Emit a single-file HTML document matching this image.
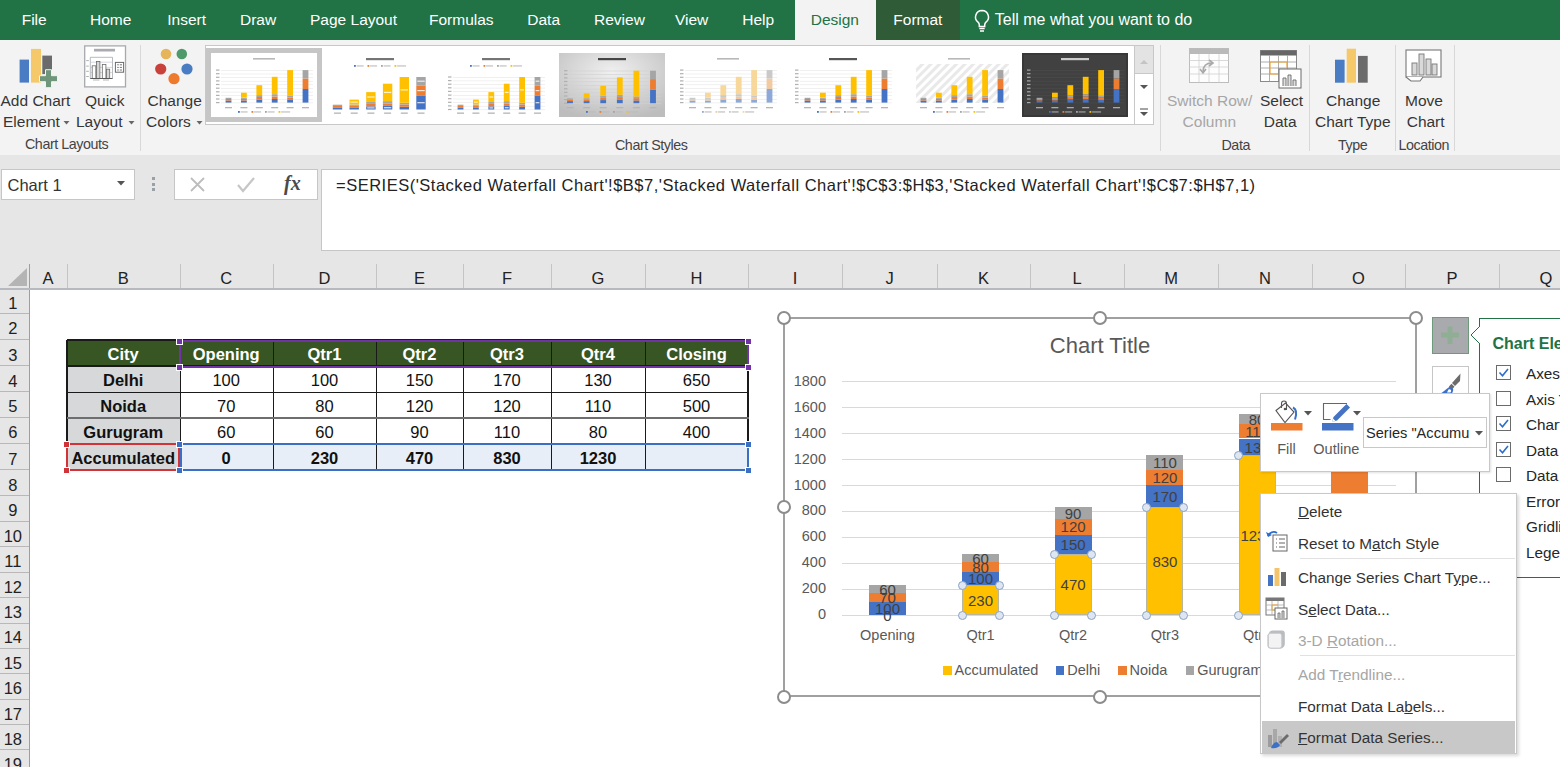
<!DOCTYPE html><html><head><meta charset="utf-8"><style>
html,body{margin:0;padding:0;}
body{width:1560px;height:767px;overflow:hidden;position:relative;background:#fff;font-family:"Liberation Sans", sans-serif;}
.t{position:absolute;line-height:1;white-space:pre;}
.r{position:absolute;box-sizing:border-box;}
</style></head><body>
<div class="r" style="left:0px;top:0px;width:1560px;height:40px;background:#217346;"></div>
<div class="r" style="left:795px;top:0px;width:81px;height:40px;background:#f3f3f3;"></div>
<div class="r" style="left:876px;top:0px;width:84px;height:40px;background:#2f5b37;"></div>
<div class="t" style="left:21.7px;top:12.3px;font-size:15.5px;color:#fff;">File</div>
<div class="t" style="left:90.0px;top:12.3px;font-size:15.5px;color:#fff;">Home</div>
<div class="t" style="left:167.3px;top:12.3px;font-size:15.5px;color:#fff;">Insert</div>
<div class="t" style="left:240.0px;top:12.3px;font-size:15.5px;color:#fff;">Draw</div>
<div class="t" style="left:310.0px;top:12.3px;font-size:15.5px;color:#fff;">Page Layout</div>
<div class="t" style="left:429.0px;top:12.3px;font-size:15.5px;color:#fff;">Formulas</div>
<div class="t" style="left:527.3px;top:12.3px;font-size:15.5px;color:#fff;">Data</div>
<div class="t" style="left:594.0px;top:12.3px;font-size:15.5px;color:#fff;">Review</div>
<div class="t" style="left:675.0px;top:12.3px;font-size:15.5px;color:#fff;">View</div>
<div class="t" style="left:742.3px;top:12.3px;font-size:15.5px;color:#fff;">Help</div>
<div class="t" style="left:810.7px;top:12.3px;font-size:15.5px;color:#217346;">Design</div>
<div class="t" style="left:893.3px;top:12.3px;font-size:15.5px;color:#fff;">Format</div>
<svg class="r" style="left:972px;top:8px;" width="20" height="25" viewBox="0 0 20 25"><path d="M10 2.5a6.5 6.5 0 0 0-4 11.6c.9.8 1.3 1.7 1.3 2.9v1.5h5.4V17c0-1.2.4-2.1 1.3-2.9A6.5 6.5 0 0 0 10 2.5z" fill="none" stroke="#fff" stroke-width="1.5"/><path d="M7.3 20.5h5.4M8 23h4" stroke="#fff" stroke-width="1.5"/></svg>
<div class="t" style="left:994.8px;top:11.9px;font-size:16px;color:#fff;">Tell me what you want to do</div>
<div class="r" style="left:0px;top:40px;width:1560px;height:115px;background:#f3f3f3;"></div>
<div class="r" style="left:0px;top:155px;width:1560px;height:1px;background:#d4d4d4;"></div>
<svg class="r" style="left:15px;top:45px;" width="48" height="45" viewBox="0 0 48 45">
<rect x="4.6" y="14.6" width="9.4" height="23" fill="#4a7cc4"/>
<rect x="16" y="3.9" width="10" height="33.7" fill="#f5c96a"/>
<rect x="27.3" y="10.6" width="9.7" height="18.5" fill="#6b6b6b"/>
<path d="M30.5 24.7h6v6h6v6h-6v6h-6v-6h-6v-6h6z" fill="#6f967a" stroke="#f3f3f3" stroke-width="1"/>
</svg>
<div class="t" style="left:0.5px;top:92.6px;font-size:15.5px;color:#363636;">Add Chart</div>
<div class="t" style="left:3.0px;top:113.8px;font-size:15.5px;color:#363636;">Element</div>
<svg class="r" style="left:63px;top:121px;" width="8" height="5" viewBox="0 0 8 5"><path d="M0.5 0h6l-3 3.5z" fill="#666"/></svg>
<svg class="r" style="left:84px;top:45px;" width="43" height="43" viewBox="0 0 43 43">
<rect x="0.7" y="0.9" width="40.8" height="41" fill="#fff" stroke="#a6a9ae" stroke-width="1.3"/>
<rect x="10" y="3.8" width="21" height="2.7" fill="#a9abb0"/>
<path d="M6.3 12.3h22.2v21.2H6.3z" fill="none" stroke="#9a9da2" stroke-width="0.7"/>
<path d="M6.3 17.2h22.2M6.3 22.4h22.2M6.3 27.6h22.2" stroke="#b9c0cc" stroke-width="0.6"/>
<path d="M2.2 15.6h2.6M2.2 21.1h2.6M2.2 26.3h2.6M2.2 31.5h2.6" stroke="#9a9a9a" stroke-width="0.8"/>
<rect x="8.2" y="20.8" width="3.6" height="12.7" fill="#fff" stroke="#6a6a6a" stroke-width="0.8"/>
<rect x="12.5" y="16.5" width="3.4" height="17" fill="#d6d6d6" stroke="#6a6a6a" stroke-width="0.8"/>
<rect x="18.3" y="19.5" width="3.6" height="14" fill="#fff" stroke="#6a6a6a" stroke-width="0.8"/>
<rect x="22.5" y="24.2" width="3.2" height="9.3" fill="#d6d6d6" stroke="#6a6a6a" stroke-width="0.8"/>
<path d="M6.3 33.5h22.2" stroke="#555" stroke-width="0.9"/>
<path d="M9 35h6.5M19 35h6" stroke="#b0b0b0" stroke-width="0.9"/>
<rect x="31.4" y="17.4" width="8.2" height="9.8" fill="#fff" stroke="#6a6a6a" stroke-width="1"/>
<path d="M33.2 19.8h1.6M35.8 19.8h2.2M33.2 22.4h1.6M35.8 22.4h2.2M33.2 25h1.6M35.8 25h2.2" stroke="#666" stroke-width="0.9"/>
</svg>
<div class="t" style="left:85.0px;top:92.6px;font-size:15.5px;color:#363636;">Quick</div>
<div class="t" style="left:76.0px;top:113.8px;font-size:15.5px;color:#363636;">Layout</div>
<svg class="r" style="left:128px;top:121px;" width="8" height="5" viewBox="0 0 8 5"><path d="M0.5 0h6l-3 3.5z" fill="#666"/></svg>
<div class="t" style="left:25.0px;top:137.4px;font-size:14.3px;color:#444;letter-spacing:-0.45px;">Chart Layouts</div>
<div class="r" style="left:140px;top:45px;width:1px;height:106px;background:#d8d8d8;"></div>
<svg class="r" style="left:150px;top:45px;" width="45" height="45" viewBox="0 0 45 45">
<circle cx="16" cy="9" r="5.3" fill="#e6b45a"/>
<circle cx="31.8" cy="9" r="5.3" fill="#4f9a6a"/>
<circle cx="10.7" cy="24" r="5.6" fill="#c8413a"/>
<circle cx="37" cy="24" r="5.6" fill="#4a7cc4"/>
<circle cx="24" cy="33.7" r="5.6" fill="#ee7a2e"/>
</svg>
<div class="t" style="left:147.5px;top:92.6px;font-size:15.5px;color:#363636;">Change</div>
<div class="t" style="left:146.0px;top:113.8px;font-size:15.5px;color:#363636;">Colors</div>
<svg class="r" style="left:196px;top:121px;" width="8" height="5" viewBox="0 0 8 5"><path d="M0.5 0h6l-3 3.5z" fill="#666"/></svg>
<div class="r" style="left:205px;top:45px;width:949px;height:80px;background:#fff;border:1px solid #c8c8c8;"></div>
<div class="r" style="left:1134px;top:45px;width:20px;height:29px;background:#e3e3e3;border:1px solid #c8c8c8;"></div>
<div class="r" style="left:1134px;top:74px;width:20px;height:25px;background:#fff;border:1px solid #c8c8c8;border-top:none;"></div>
<div class="r" style="left:1134px;top:98px;width:20px;height:27px;background:#fff;border:1px solid #c8c8c8;border-top:none;"></div>
<svg class="r" style="left:1139px;top:59px;" width="10" height="6" viewBox="0 0 10 6"><path d="M1 5h8L5 1z" fill="#c4c4c4"/></svg>
<svg class="r" style="left:1139px;top:84px;" width="10" height="6" viewBox="0 0 10 6"><path d="M1 1h8L5 5z" fill="#555"/></svg>
<svg class="r" style="left:1139px;top:108px;" width="10" height="9" viewBox="0 0 10 9"><path d="M1 1h8" stroke="#666" stroke-width="1.2"/><path d="M1 4h8L5 8z" fill="#555"/></svg>
<div class="r" style="left:206px;top:48px;width:116px;height:74px;background:#c6c6c6;"></div>
<svg class="r" style="left:211px;top:53px;" width="106" height="64" viewBox="0 0 106 64"><rect x="0" y="0" width="106" height="64" fill="#fff"/><rect x="10" y="49.6" width="92" height="0.6" fill="#e6e6e6"/><rect x="10" y="46.0" width="92" height="0.6" fill="#e6e6e6"/><rect x="10" y="42.4" width="92" height="0.6" fill="#e6e6e6"/><rect x="10" y="38.8" width="92" height="0.6" fill="#e6e6e6"/><rect x="10" y="35.2" width="92" height="0.6" fill="#e6e6e6"/><rect x="10" y="31.5" width="92" height="0.6" fill="#e6e6e6"/><rect x="10" y="27.9" width="92" height="0.6" fill="#e6e6e6"/><rect x="10" y="24.3" width="92" height="0.6" fill="#e6e6e6"/><rect x="10" y="20.7" width="92" height="0.6" fill="#e6e6e6"/><rect x="10" y="17.1" width="92" height="0.6" fill="#e6e6e6"/><rect x="5" y="49.0" width="3.5" height="1.2" fill="#b0b0b0"/><rect x="5" y="45.4" width="3.5" height="1.2" fill="#b0b0b0"/><rect x="5" y="41.8" width="3.5" height="1.2" fill="#b0b0b0"/><rect x="5" y="38.2" width="3.5" height="1.2" fill="#b0b0b0"/><rect x="5" y="34.6" width="3.5" height="1.2" fill="#b0b0b0"/><rect x="5" y="30.9" width="3.5" height="1.2" fill="#b0b0b0"/><rect x="5" y="27.3" width="3.5" height="1.2" fill="#b0b0b0"/><rect x="5" y="23.7" width="3.5" height="1.2" fill="#b0b0b0"/><rect x="5" y="20.1" width="3.5" height="1.2" fill="#b0b0b0"/><rect x="5" y="16.5" width="3.5" height="1.2" fill="#b0b0b0"/><rect x="14.6" y="47.5" width="5.8" height="2.1" fill="#4472c4"/><rect x="14.6" y="46.0" width="5.8" height="1.5" fill="#ed7d31"/><rect x="14.6" y="44.8" width="5.8" height="1.3" fill="#a5a5a5"/><rect x="14.0" y="54.0" width="7" height="1.3" fill="#b5b5b5"/><rect x="30.0" y="47.5" width="5.8" height="2.1" fill="#4472c4"/><rect x="30.0" y="45.8" width="5.8" height="1.7" fill="#ed7d31"/><rect x="30.0" y="44.6" width="5.8" height="1.3" fill="#a5a5a5"/><rect x="30.0" y="39.7" width="5.8" height="4.8" fill="#ffc000"/><rect x="29.4" y="54.0" width="7" height="1.3" fill="#b5b5b5"/><rect x="45.4" y="46.5" width="5.8" height="3.1" fill="#4472c4"/><rect x="45.4" y="43.9" width="5.8" height="2.5" fill="#ed7d31"/><rect x="45.4" y="42.1" width="5.8" height="1.9" fill="#a5a5a5"/><rect x="45.4" y="32.2" width="5.8" height="9.9" fill="#ffc000"/><rect x="44.8" y="54.0" width="7" height="1.3" fill="#b5b5b5"/><rect x="60.8" y="46.0" width="5.8" height="3.6" fill="#4472c4"/><rect x="60.8" y="43.5" width="5.8" height="2.5" fill="#ed7d31"/><rect x="60.8" y="41.2" width="5.8" height="2.3" fill="#a5a5a5"/><rect x="60.8" y="23.8" width="5.8" height="17.4" fill="#ffc000"/><rect x="60.2" y="54.0" width="7" height="1.3" fill="#b5b5b5"/><rect x="76.2" y="46.9" width="5.8" height="2.7" fill="#4472c4"/><rect x="76.2" y="44.6" width="5.8" height="2.3" fill="#ed7d31"/><rect x="76.2" y="42.9" width="5.8" height="1.7" fill="#a5a5a5"/><rect x="76.2" y="17.1" width="5.8" height="25.8" fill="#ffc000"/><rect x="75.6" y="54.0" width="7" height="1.3" fill="#b5b5b5"/><rect x="91.6" y="36.0" width="5.8" height="13.6" fill="#4472c4"/><rect x="91.6" y="25.5" width="5.8" height="10.5" fill="#ed7d31"/><rect x="91.6" y="17.1" width="5.8" height="8.4" fill="#a5a5a5"/><rect x="91.0" y="54.0" width="7" height="1.3" fill="#b5b5b5"/><rect x="42.0" y="5" width="22" height="1.6" fill="#9a9a9a" opacity="0.7"/><rect x="27.0" y="58" width="1.8" height="1.8" fill="#4472c4"/><rect x="29.6" y="58.4" width="7" height="1.1" fill="#bbb"/><rect x="40.5" y="58" width="1.8" height="1.8" fill="#ed7d31"/><rect x="43.1" y="58.4" width="7" height="1.1" fill="#bbb"/><rect x="54.0" y="58" width="1.8" height="1.8" fill="#a5a5a5"/><rect x="56.6" y="58.4" width="7" height="1.1" fill="#bbb"/><rect x="67.5" y="58" width="1.8" height="1.8" fill="#ffc000"/><rect x="70.1" y="58.4" width="9" height="1.1" fill="#bbb"/></svg>
<svg class="r" style="left:327px;top:53px;" width="106" height="64" viewBox="0 0 106 64"><rect x="0" y="0" width="106" height="64" fill="#fff"/><rect x="5.8" y="54.4" width="9.4" height="2.1" fill="#4472c4"/><rect x="5.8" y="52.9" width="9.4" height="1.5" fill="#ed7d31"/><rect x="5.8" y="51.7" width="9.4" height="1.3" fill="#a5a5a5"/><rect x="7.0" y="59.5" width="7" height="1.3" fill="#b5b5b5"/><rect x="22.5" y="54.4" width="9.4" height="2.1" fill="#4472c4"/><rect x="22.5" y="52.7" width="9.4" height="1.7" fill="#ed7d31"/><rect x="22.5" y="51.5" width="9.4" height="1.3" fill="#a5a5a5"/><rect x="22.5" y="46.6" width="9.4" height="4.8" fill="#ffc000"/><rect x="23.5" y="48.5" width="7.4" height="1.2" fill="#fff" opacity="0.8"/><rect x="23.7" y="59.5" width="7" height="1.3" fill="#b5b5b5"/><rect x="39.2" y="53.4" width="9.4" height="3.1" fill="#4472c4"/><rect x="40.2" y="54.3" width="7.4" height="1.2" fill="#fff" opacity="0.8"/><rect x="39.2" y="50.8" width="9.4" height="2.5" fill="#ed7d31"/><rect x="39.2" y="49.0" width="9.4" height="1.9" fill="#a5a5a5"/><rect x="39.2" y="39.1" width="9.4" height="9.9" fill="#ffc000"/><rect x="40.2" y="43.4" width="7.4" height="1.2" fill="#fff" opacity="0.8"/><rect x="40.4" y="59.5" width="7" height="1.3" fill="#b5b5b5"/><rect x="55.9" y="52.9" width="9.4" height="3.6" fill="#4472c4"/><rect x="56.9" y="54.1" width="7.4" height="1.2" fill="#fff" opacity="0.8"/><rect x="55.9" y="50.4" width="9.4" height="2.5" fill="#ed7d31"/><rect x="55.9" y="48.1" width="9.4" height="2.3" fill="#a5a5a5"/><rect x="55.9" y="30.7" width="9.4" height="17.4" fill="#ffc000"/><rect x="56.9" y="38.8" width="7.4" height="1.2" fill="#fff" opacity="0.8"/><rect x="57.1" y="59.5" width="7" height="1.3" fill="#b5b5b5"/><rect x="72.6" y="53.8" width="9.4" height="2.7" fill="#4472c4"/><rect x="72.6" y="51.5" width="9.4" height="2.3" fill="#ed7d31"/><rect x="72.6" y="49.8" width="9.4" height="1.7" fill="#a5a5a5"/><rect x="72.6" y="24.0" width="9.4" height="25.8" fill="#ffc000"/><rect x="73.6" y="36.3" width="7.4" height="1.2" fill="#fff" opacity="0.8"/><rect x="73.8" y="59.5" width="7" height="1.3" fill="#b5b5b5"/><rect x="89.3" y="42.9" width="9.4" height="13.6" fill="#4472c4"/><rect x="90.3" y="49.1" width="7.4" height="1.2" fill="#fff" opacity="0.8"/><rect x="89.3" y="32.4" width="9.4" height="10.5" fill="#ed7d31"/><rect x="90.3" y="37.0" width="7.4" height="1.2" fill="#fff" opacity="0.8"/><rect x="89.3" y="24.0" width="9.4" height="8.4" fill="#a5a5a5"/><rect x="90.3" y="27.6" width="7.4" height="1.2" fill="#fff" opacity="0.8"/><rect x="90.5" y="59.5" width="7" height="1.3" fill="#b5b5b5"/><rect x="39.0" y="5" width="28" height="2.2" fill="#666" opacity="0.9"/><rect x="27.0" y="12" width="1.8" height="1.8" fill="#4472c4"/><rect x="29.6" y="12.4" width="7" height="1.1" fill="#bbb"/><rect x="40.5" y="12" width="1.8" height="1.8" fill="#ed7d31"/><rect x="43.1" y="12.4" width="7" height="1.1" fill="#bbb"/><rect x="54.0" y="12" width="1.8" height="1.8" fill="#a5a5a5"/><rect x="56.6" y="12.4" width="7" height="1.1" fill="#bbb"/><rect x="67.5" y="12" width="1.8" height="1.8" fill="#ffc000"/><rect x="70.1" y="12.4" width="9" height="1.1" fill="#bbb"/></svg>
<svg class="r" style="left:443px;top:53px;" width="106" height="64" viewBox="0 0 106 64"><rect x="0" y="0" width="106" height="64" fill="#fff"/><rect x="10" y="56.5" width="92" height="0.6" fill="#e6e6e6"/><rect x="10" y="52.9" width="92" height="0.6" fill="#e6e6e6"/><rect x="10" y="49.3" width="92" height="0.6" fill="#e6e6e6"/><rect x="10" y="45.7" width="92" height="0.6" fill="#e6e6e6"/><rect x="10" y="42.1" width="92" height="0.6" fill="#e6e6e6"/><rect x="10" y="38.4" width="92" height="0.6" fill="#e6e6e6"/><rect x="10" y="34.8" width="92" height="0.6" fill="#e6e6e6"/><rect x="10" y="31.2" width="92" height="0.6" fill="#e6e6e6"/><rect x="10" y="27.6" width="92" height="0.6" fill="#e6e6e6"/><rect x="10" y="24.0" width="92" height="0.6" fill="#e6e6e6"/><rect x="5" y="55.9" width="3.5" height="1.2" fill="#b0b0b0"/><rect x="5" y="52.3" width="3.5" height="1.2" fill="#b0b0b0"/><rect x="5" y="48.7" width="3.5" height="1.2" fill="#b0b0b0"/><rect x="5" y="45.1" width="3.5" height="1.2" fill="#b0b0b0"/><rect x="5" y="41.5" width="3.5" height="1.2" fill="#b0b0b0"/><rect x="5" y="37.8" width="3.5" height="1.2" fill="#b0b0b0"/><rect x="5" y="34.2" width="3.5" height="1.2" fill="#b0b0b0"/><rect x="5" y="30.6" width="3.5" height="1.2" fill="#b0b0b0"/><rect x="5" y="27.0" width="3.5" height="1.2" fill="#b0b0b0"/><rect x="5" y="23.4" width="3.5" height="1.2" fill="#b0b0b0"/><rect x="14.6" y="54.4" width="5.8" height="2.1" fill="#4472c4"/><rect x="14.6" y="52.9" width="5.8" height="1.5" fill="#ed7d31"/><rect x="14.6" y="51.7" width="5.8" height="1.3" fill="#a5a5a5"/><rect x="14.0" y="59.5" width="7" height="1.3" fill="#b5b5b5"/><rect x="30.0" y="54.4" width="5.8" height="2.1" fill="#4472c4"/><rect x="30.0" y="52.7" width="5.8" height="1.7" fill="#ed7d31"/><rect x="30.0" y="51.5" width="5.8" height="1.3" fill="#a5a5a5"/><rect x="30.0" y="46.6" width="5.8" height="4.8" fill="#ffc000"/><rect x="31.0" y="48.5" width="3.8" height="1.2" fill="#fff" opacity="0.8"/><rect x="29.4" y="59.5" width="7" height="1.3" fill="#b5b5b5"/><rect x="45.4" y="53.4" width="5.8" height="3.1" fill="#4472c4"/><rect x="46.4" y="54.3" width="3.8" height="1.2" fill="#fff" opacity="0.8"/><rect x="45.4" y="50.8" width="5.8" height="2.5" fill="#ed7d31"/><rect x="45.4" y="49.0" width="5.8" height="1.9" fill="#a5a5a5"/><rect x="45.4" y="39.1" width="5.8" height="9.9" fill="#ffc000"/><rect x="46.4" y="43.4" width="3.8" height="1.2" fill="#fff" opacity="0.8"/><rect x="44.8" y="59.5" width="7" height="1.3" fill="#b5b5b5"/><rect x="60.8" y="52.9" width="5.8" height="3.6" fill="#4472c4"/><rect x="61.8" y="54.1" width="3.8" height="1.2" fill="#fff" opacity="0.8"/><rect x="60.8" y="50.4" width="5.8" height="2.5" fill="#ed7d31"/><rect x="60.8" y="48.1" width="5.8" height="2.3" fill="#a5a5a5"/><rect x="60.8" y="30.7" width="5.8" height="17.4" fill="#ffc000"/><rect x="61.8" y="38.8" width="3.8" height="1.2" fill="#fff" opacity="0.8"/><rect x="60.2" y="59.5" width="7" height="1.3" fill="#b5b5b5"/><rect x="76.2" y="53.8" width="5.8" height="2.7" fill="#4472c4"/><rect x="76.2" y="51.5" width="5.8" height="2.3" fill="#ed7d31"/><rect x="76.2" y="49.8" width="5.8" height="1.7" fill="#a5a5a5"/><rect x="76.2" y="24.0" width="5.8" height="25.8" fill="#ffc000"/><rect x="77.2" y="36.3" width="3.8" height="1.2" fill="#fff" opacity="0.8"/><rect x="75.6" y="59.5" width="7" height="1.3" fill="#b5b5b5"/><rect x="91.6" y="42.9" width="5.8" height="13.6" fill="#4472c4"/><rect x="92.6" y="49.1" width="3.8" height="1.2" fill="#fff" opacity="0.8"/><rect x="91.6" y="32.4" width="5.8" height="10.5" fill="#ed7d31"/><rect x="92.6" y="37.0" width="3.8" height="1.2" fill="#fff" opacity="0.8"/><rect x="91.6" y="24.0" width="5.8" height="8.4" fill="#a5a5a5"/><rect x="92.6" y="27.6" width="3.8" height="1.2" fill="#fff" opacity="0.8"/><rect x="91.0" y="59.5" width="7" height="1.3" fill="#b5b5b5"/><rect x="39.0" y="5" width="28" height="2.2" fill="#666" opacity="0.9"/><rect x="27.0" y="12" width="1.8" height="1.8" fill="#4472c4"/><rect x="29.6" y="12.4" width="7" height="1.1" fill="#bbb"/><rect x="40.5" y="12" width="1.8" height="1.8" fill="#ed7d31"/><rect x="43.1" y="12.4" width="7" height="1.1" fill="#bbb"/><rect x="54.0" y="12" width="1.8" height="1.8" fill="#a5a5a5"/><rect x="56.6" y="12.4" width="7" height="1.1" fill="#bbb"/><rect x="67.5" y="12" width="1.8" height="1.8" fill="#ffc000"/><rect x="70.1" y="12.4" width="9" height="1.1" fill="#bbb"/></svg>
<svg class="r" style="left:559px;top:53px;" width="106" height="64" viewBox="0 0 106 64"><rect x="0" y="0" width="106" height="64" fill="#fff"/><defs><radialGradient id="g4" cx="50%" cy="30%" r="75%"><stop offset="0" stop-color="#f0f0f0"/><stop offset="1" stop-color="#bdbdbd"/></radialGradient></defs><rect x="0" y="0" width="106" height="64" fill="url(#g4)"/><rect x="10" y="50.2" width="92" height="0.6" fill="#d0d0d0"/><rect x="10" y="46.6" width="92" height="0.6" fill="#d0d0d0"/><rect x="10" y="43.0" width="92" height="0.6" fill="#d0d0d0"/><rect x="10" y="39.4" width="92" height="0.6" fill="#d0d0d0"/><rect x="10" y="35.8" width="92" height="0.6" fill="#d0d0d0"/><rect x="10" y="32.1" width="92" height="0.6" fill="#d0d0d0"/><rect x="10" y="28.5" width="92" height="0.6" fill="#d0d0d0"/><rect x="10" y="24.9" width="92" height="0.6" fill="#d0d0d0"/><rect x="10" y="21.3" width="92" height="0.6" fill="#d0d0d0"/><rect x="10" y="17.7" width="92" height="0.6" fill="#d0d0d0"/><rect x="5" y="49.6" width="3.5" height="1.2" fill="#b0b0b0"/><rect x="5" y="46.0" width="3.5" height="1.2" fill="#b0b0b0"/><rect x="5" y="42.4" width="3.5" height="1.2" fill="#b0b0b0"/><rect x="5" y="38.8" width="3.5" height="1.2" fill="#b0b0b0"/><rect x="5" y="35.2" width="3.5" height="1.2" fill="#b0b0b0"/><rect x="5" y="31.5" width="3.5" height="1.2" fill="#b0b0b0"/><rect x="5" y="27.9" width="3.5" height="1.2" fill="#b0b0b0"/><rect x="5" y="24.3" width="3.5" height="1.2" fill="#b0b0b0"/><rect x="5" y="20.7" width="3.5" height="1.2" fill="#b0b0b0"/><rect x="5" y="17.1" width="3.5" height="1.2" fill="#b0b0b0"/><rect x="8.1" y="48.1" width="5.8" height="2.1" fill="#4472c4"/><rect x="8.1" y="46.6" width="5.8" height="1.5" fill="#ed7d31"/><rect x="8.1" y="45.4" width="5.8" height="1.3" fill="#a5a5a5"/><rect x="7.5" y="54.0" width="7" height="1.3" fill="#b5b5b5"/><rect x="24.7" y="48.1" width="5.8" height="2.1" fill="#4472c4"/><rect x="24.7" y="46.4" width="5.8" height="1.7" fill="#ed7d31"/><rect x="24.7" y="45.2" width="5.8" height="1.3" fill="#a5a5a5"/><rect x="24.7" y="40.3" width="5.8" height="4.8" fill="#ffc000"/><rect x="24.1" y="54.0" width="7" height="1.3" fill="#b5b5b5"/><rect x="41.3" y="47.1" width="5.8" height="3.1" fill="#4472c4"/><rect x="41.3" y="44.5" width="5.8" height="2.5" fill="#ed7d31"/><rect x="41.3" y="42.7" width="5.8" height="1.9" fill="#a5a5a5"/><rect x="41.3" y="32.8" width="5.8" height="9.9" fill="#ffc000"/><rect x="40.7" y="54.0" width="7" height="1.3" fill="#b5b5b5"/><rect x="57.9" y="46.6" width="5.8" height="3.6" fill="#4472c4"/><rect x="57.9" y="44.1" width="5.8" height="2.5" fill="#ed7d31"/><rect x="57.9" y="41.8" width="5.8" height="2.3" fill="#a5a5a5"/><rect x="57.9" y="24.4" width="5.8" height="17.4" fill="#ffc000"/><rect x="57.3" y="54.0" width="7" height="1.3" fill="#b5b5b5"/><rect x="74.5" y="47.5" width="5.8" height="2.7" fill="#4472c4"/><rect x="74.5" y="45.2" width="5.8" height="2.3" fill="#ed7d31"/><rect x="74.5" y="43.5" width="5.8" height="1.7" fill="#a5a5a5"/><rect x="74.5" y="17.7" width="5.8" height="25.8" fill="#ffc000"/><rect x="73.9" y="54.0" width="7" height="1.3" fill="#b5b5b5"/><rect x="91.1" y="36.6" width="5.8" height="13.6" fill="#4472c4"/><rect x="91.1" y="26.1" width="5.8" height="10.5" fill="#ed7d31"/><rect x="91.1" y="17.7" width="5.8" height="8.4" fill="#a5a5a5"/><rect x="90.5" y="54.0" width="7" height="1.3" fill="#b5b5b5"/><rect x="39.0" y="5" width="28" height="2.2" fill="#333" opacity="0.9"/><rect x="27.0" y="58" width="1.8" height="1.8" fill="#4472c4"/><rect x="29.6" y="58.4" width="7" height="1.1" fill="#bbb"/><rect x="40.5" y="58" width="1.8" height="1.8" fill="#ed7d31"/><rect x="43.1" y="58.4" width="7" height="1.1" fill="#bbb"/><rect x="54.0" y="58" width="1.8" height="1.8" fill="#a5a5a5"/><rect x="56.6" y="58.4" width="7" height="1.1" fill="#bbb"/><rect x="67.5" y="58" width="1.8" height="1.8" fill="#ffc000"/><rect x="70.1" y="58.4" width="9" height="1.1" fill="#bbb"/></svg>
<svg class="r" style="left:675px;top:53px;" width="106" height="64" viewBox="0 0 106 64"><rect x="0" y="0" width="106" height="64" fill="#fff"/><rect x="10" y="49.6" width="92" height="0.6" fill="#e6e6e6"/><rect x="10" y="46.0" width="92" height="0.6" fill="#e6e6e6"/><rect x="10" y="42.4" width="92" height="0.6" fill="#e6e6e6"/><rect x="10" y="38.8" width="92" height="0.6" fill="#e6e6e6"/><rect x="10" y="35.2" width="92" height="0.6" fill="#e6e6e6"/><rect x="10" y="31.5" width="92" height="0.6" fill="#e6e6e6"/><rect x="10" y="27.9" width="92" height="0.6" fill="#e6e6e6"/><rect x="10" y="24.3" width="92" height="0.6" fill="#e6e6e6"/><rect x="10" y="20.7" width="92" height="0.6" fill="#e6e6e6"/><rect x="10" y="17.1" width="92" height="0.6" fill="#e6e6e6"/><rect x="5" y="49.0" width="3.5" height="1.2" fill="#b0b0b0"/><rect x="5" y="45.4" width="3.5" height="1.2" fill="#b0b0b0"/><rect x="5" y="41.8" width="3.5" height="1.2" fill="#b0b0b0"/><rect x="5" y="38.2" width="3.5" height="1.2" fill="#b0b0b0"/><rect x="5" y="34.6" width="3.5" height="1.2" fill="#b0b0b0"/><rect x="5" y="30.9" width="3.5" height="1.2" fill="#b0b0b0"/><rect x="5" y="27.3" width="3.5" height="1.2" fill="#b0b0b0"/><rect x="5" y="23.7" width="3.5" height="1.2" fill="#b0b0b0"/><rect x="5" y="20.1" width="3.5" height="1.2" fill="#b0b0b0"/><rect x="5" y="16.5" width="3.5" height="1.2" fill="#b0b0b0"/><rect x="14.6" y="47.5" width="5.8" height="2.1" fill="#8ea9d8"/><rect x="14.6" y="46.0" width="5.8" height="1.5" fill="#f2c9a0"/><rect x="14.6" y="44.8" width="5.8" height="1.3" fill="#c9c9c9"/><rect x="14.0" y="54.0" width="7" height="1.3" fill="#b5b5b5"/><rect x="30.0" y="47.5" width="5.8" height="2.1" fill="#8ea9d8"/><rect x="30.0" y="45.8" width="5.8" height="1.7" fill="#f2c9a0"/><rect x="30.0" y="44.6" width="5.8" height="1.3" fill="#c9c9c9"/><rect x="30.0" y="39.7" width="5.8" height="4.8" fill="#f7d89a"/><rect x="29.4" y="54.0" width="7" height="1.3" fill="#b5b5b5"/><rect x="45.4" y="46.5" width="5.8" height="3.1" fill="#8ea9d8"/><rect x="45.4" y="43.9" width="5.8" height="2.5" fill="#f2c9a0"/><rect x="45.4" y="42.1" width="5.8" height="1.9" fill="#c9c9c9"/><rect x="45.4" y="32.2" width="5.8" height="9.9" fill="#f7d89a"/><rect x="44.8" y="54.0" width="7" height="1.3" fill="#b5b5b5"/><rect x="60.8" y="46.0" width="5.8" height="3.6" fill="#8ea9d8"/><rect x="60.8" y="43.5" width="5.8" height="2.5" fill="#f2c9a0"/><rect x="60.8" y="41.2" width="5.8" height="2.3" fill="#c9c9c9"/><rect x="60.8" y="23.8" width="5.8" height="17.4" fill="#f7d89a"/><rect x="60.2" y="54.0" width="7" height="1.3" fill="#b5b5b5"/><rect x="76.2" y="46.9" width="5.8" height="2.7" fill="#8ea9d8"/><rect x="76.2" y="44.6" width="5.8" height="2.3" fill="#f2c9a0"/><rect x="76.2" y="42.9" width="5.8" height="1.7" fill="#c9c9c9"/><rect x="76.2" y="17.1" width="5.8" height="25.8" fill="#f7d89a"/><rect x="75.6" y="54.0" width="7" height="1.3" fill="#b5b5b5"/><rect x="91.6" y="36.0" width="5.8" height="13.6" fill="#8ea9d8"/><rect x="91.6" y="25.5" width="5.8" height="10.5" fill="#f2c9a0"/><rect x="91.6" y="17.1" width="5.8" height="8.4" fill="#c9c9c9"/><rect x="91.0" y="54.0" width="7" height="1.3" fill="#b5b5b5"/><rect x="42.0" y="5" width="22" height="1.6" fill="#9a9a9a" opacity="0.7"/><rect x="27.0" y="58" width="1.8" height="1.8" fill="#8ea9d8"/><rect x="29.6" y="58.4" width="7" height="1.1" fill="#bbb"/><rect x="40.5" y="58" width="1.8" height="1.8" fill="#f2c9a0"/><rect x="43.1" y="58.4" width="7" height="1.1" fill="#bbb"/><rect x="54.0" y="58" width="1.8" height="1.8" fill="#c9c9c9"/><rect x="56.6" y="58.4" width="7" height="1.1" fill="#bbb"/><rect x="67.5" y="58" width="1.8" height="1.8" fill="#f7d89a"/><rect x="70.1" y="58.4" width="9" height="1.1" fill="#bbb"/></svg>
<svg class="r" style="left:790px;top:53px;" width="106" height="64" viewBox="0 0 106 64"><rect x="0" y="0" width="106" height="64" fill="#fff"/><rect x="10" y="49.6" width="92" height="0.6" fill="#e6e6e6"/><rect x="10" y="46.0" width="92" height="0.6" fill="#e6e6e6"/><rect x="10" y="42.4" width="92" height="0.6" fill="#e6e6e6"/><rect x="10" y="38.8" width="92" height="0.6" fill="#e6e6e6"/><rect x="10" y="35.2" width="92" height="0.6" fill="#e6e6e6"/><rect x="10" y="31.5" width="92" height="0.6" fill="#e6e6e6"/><rect x="10" y="27.9" width="92" height="0.6" fill="#e6e6e6"/><rect x="10" y="24.3" width="92" height="0.6" fill="#e6e6e6"/><rect x="10" y="20.7" width="92" height="0.6" fill="#e6e6e6"/><rect x="10" y="17.1" width="92" height="0.6" fill="#e6e6e6"/><rect x="5" y="49.0" width="3.5" height="1.2" fill="#b0b0b0"/><rect x="5" y="45.4" width="3.5" height="1.2" fill="#b0b0b0"/><rect x="5" y="41.8" width="3.5" height="1.2" fill="#b0b0b0"/><rect x="5" y="38.2" width="3.5" height="1.2" fill="#b0b0b0"/><rect x="5" y="34.6" width="3.5" height="1.2" fill="#b0b0b0"/><rect x="5" y="30.9" width="3.5" height="1.2" fill="#b0b0b0"/><rect x="5" y="27.3" width="3.5" height="1.2" fill="#b0b0b0"/><rect x="5" y="23.7" width="3.5" height="1.2" fill="#b0b0b0"/><rect x="5" y="20.1" width="3.5" height="1.2" fill="#b0b0b0"/><rect x="5" y="16.5" width="3.5" height="1.2" fill="#b0b0b0"/><rect x="14.6" y="47.5" width="5.8" height="2.1" fill="#4472c4"/><rect x="14.6" y="46.0" width="5.8" height="1.5" fill="#ed7d31"/><rect x="14.6" y="44.8" width="5.8" height="1.3" fill="#a5a5a5"/><rect x="14.0" y="54.0" width="7" height="1.3" fill="#b5b5b5"/><rect x="30.0" y="47.5" width="5.8" height="2.1" fill="#4472c4"/><rect x="30.0" y="45.8" width="5.8" height="1.7" fill="#ed7d31"/><rect x="30.0" y="44.6" width="5.8" height="1.3" fill="#a5a5a5"/><rect x="30.0" y="39.7" width="5.8" height="4.8" fill="#ffc000"/><rect x="29.4" y="54.0" width="7" height="1.3" fill="#b5b5b5"/><rect x="45.4" y="46.5" width="5.8" height="3.1" fill="#4472c4"/><rect x="45.4" y="43.9" width="5.8" height="2.5" fill="#ed7d31"/><rect x="45.4" y="42.1" width="5.8" height="1.9" fill="#a5a5a5"/><rect x="45.4" y="32.2" width="5.8" height="9.9" fill="#ffc000"/><rect x="44.8" y="54.0" width="7" height="1.3" fill="#b5b5b5"/><rect x="60.8" y="46.0" width="5.8" height="3.6" fill="#4472c4"/><rect x="60.8" y="43.5" width="5.8" height="2.5" fill="#ed7d31"/><rect x="60.8" y="41.2" width="5.8" height="2.3" fill="#a5a5a5"/><rect x="60.8" y="23.8" width="5.8" height="17.4" fill="#ffc000"/><rect x="60.2" y="54.0" width="7" height="1.3" fill="#b5b5b5"/><rect x="76.2" y="46.9" width="5.8" height="2.7" fill="#4472c4"/><rect x="76.2" y="44.6" width="5.8" height="2.3" fill="#ed7d31"/><rect x="76.2" y="42.9" width="5.8" height="1.7" fill="#a5a5a5"/><rect x="76.2" y="17.1" width="5.8" height="25.8" fill="#ffc000"/><rect x="75.6" y="54.0" width="7" height="1.3" fill="#b5b5b5"/><rect x="91.6" y="36.0" width="5.8" height="13.6" fill="#4472c4"/><rect x="91.6" y="25.5" width="5.8" height="10.5" fill="#ed7d31"/><rect x="91.6" y="17.1" width="5.8" height="8.4" fill="#a5a5a5"/><rect x="91.0" y="54.0" width="7" height="1.3" fill="#b5b5b5"/><rect x="39.0" y="5" width="28" height="2.2" fill="#444" opacity="0.9"/><rect x="27.0" y="58" width="1.8" height="1.8" fill="#4472c4"/><rect x="29.6" y="58.4" width="7" height="1.1" fill="#bbb"/><rect x="40.5" y="58" width="1.8" height="1.8" fill="#ed7d31"/><rect x="43.1" y="58.4" width="7" height="1.1" fill="#bbb"/><rect x="54.0" y="58" width="1.8" height="1.8" fill="#a5a5a5"/><rect x="56.6" y="58.4" width="7" height="1.1" fill="#bbb"/><rect x="67.5" y="58" width="1.8" height="1.8" fill="#ffc000"/><rect x="70.1" y="58.4" width="9" height="1.1" fill="#bbb"/></svg>
<svg class="r" style="left:906px;top:53px;" width="106" height="64" viewBox="0 0 106 64"><rect x="0" y="0" width="106" height="64" fill="#fff"/><defs><pattern id="p7" width="6" height="6" patternUnits="userSpaceOnUse" patternTransform="rotate(45)"><rect width="3" height="6" fill="#e9e9e9"/></pattern></defs><rect x="10" y="11" width="93" height="39" fill="url(#p7)"/><rect x="14.6" y="47.5" width="5.8" height="2.1" fill="#4472c4"/><rect x="14.6" y="46.0" width="5.8" height="1.5" fill="#ed7d31"/><rect x="14.6" y="44.8" width="5.8" height="1.3" fill="#a5a5a5"/><rect x="14.0" y="54.0" width="7" height="1.3" fill="#b5b5b5"/><rect x="30.0" y="47.5" width="5.8" height="2.1" fill="#4472c4"/><rect x="30.0" y="45.8" width="5.8" height="1.7" fill="#ed7d31"/><rect x="30.0" y="44.6" width="5.8" height="1.3" fill="#a5a5a5"/><rect x="30.0" y="39.7" width="5.8" height="4.8" fill="#ffc000"/><rect x="29.4" y="54.0" width="7" height="1.3" fill="#b5b5b5"/><rect x="45.4" y="46.5" width="5.8" height="3.1" fill="#4472c4"/><rect x="45.4" y="43.9" width="5.8" height="2.5" fill="#ed7d31"/><rect x="45.4" y="42.1" width="5.8" height="1.9" fill="#a5a5a5"/><rect x="45.4" y="32.2" width="5.8" height="9.9" fill="#ffc000"/><rect x="44.8" y="54.0" width="7" height="1.3" fill="#b5b5b5"/><rect x="60.8" y="46.0" width="5.8" height="3.6" fill="#4472c4"/><rect x="60.8" y="43.5" width="5.8" height="2.5" fill="#ed7d31"/><rect x="60.8" y="41.2" width="5.8" height="2.3" fill="#a5a5a5"/><rect x="60.8" y="23.8" width="5.8" height="17.4" fill="#ffc000"/><rect x="60.2" y="54.0" width="7" height="1.3" fill="#b5b5b5"/><rect x="76.2" y="46.9" width="5.8" height="2.7" fill="#4472c4"/><rect x="76.2" y="44.6" width="5.8" height="2.3" fill="#ed7d31"/><rect x="76.2" y="42.9" width="5.8" height="1.7" fill="#a5a5a5"/><rect x="76.2" y="17.1" width="5.8" height="25.8" fill="#ffc000"/><rect x="75.6" y="54.0" width="7" height="1.3" fill="#b5b5b5"/><rect x="91.6" y="36.0" width="5.8" height="13.6" fill="#4472c4"/><rect x="91.6" y="25.5" width="5.8" height="10.5" fill="#ed7d31"/><rect x="91.6" y="17.1" width="5.8" height="8.4" fill="#a5a5a5"/><rect x="91.0" y="54.0" width="7" height="1.3" fill="#b5b5b5"/><rect x="42.0" y="5" width="22" height="1.6" fill="#9a9a9a" opacity="0.7"/><rect x="27.0" y="58" width="1.8" height="1.8" fill="#4472c4"/><rect x="29.6" y="58.4" width="7" height="1.1" fill="#bbb"/><rect x="40.5" y="58" width="1.8" height="1.8" fill="#ed7d31"/><rect x="43.1" y="58.4" width="7" height="1.1" fill="#bbb"/><rect x="54.0" y="58" width="1.8" height="1.8" fill="#a5a5a5"/><rect x="56.6" y="58.4" width="7" height="1.1" fill="#bbb"/><rect x="67.5" y="58" width="1.8" height="1.8" fill="#ffc000"/><rect x="70.1" y="58.4" width="9" height="1.1" fill="#bbb"/></svg>
<svg class="r" style="left:1022px;top:53px;" width="106" height="64" viewBox="0 0 106 64"><rect x="0" y="0" width="106" height="64" fill="#383838"/><rect x="2" y="2" width="102" height="60" fill="#4a4a4a" opacity="0.5"/><rect x="10" y="49.6" width="92" height="0.6" fill="#4c4c4c"/><rect x="10" y="46.0" width="92" height="0.6" fill="#4c4c4c"/><rect x="10" y="42.4" width="92" height="0.6" fill="#4c4c4c"/><rect x="10" y="38.8" width="92" height="0.6" fill="#4c4c4c"/><rect x="10" y="35.2" width="92" height="0.6" fill="#4c4c4c"/><rect x="10" y="31.5" width="92" height="0.6" fill="#4c4c4c"/><rect x="10" y="27.9" width="92" height="0.6" fill="#4c4c4c"/><rect x="10" y="24.3" width="92" height="0.6" fill="#4c4c4c"/><rect x="10" y="20.7" width="92" height="0.6" fill="#4c4c4c"/><rect x="10" y="17.1" width="92" height="0.6" fill="#4c4c4c"/><rect x="5" y="49.0" width="3.5" height="1.2" fill="#aaa"/><rect x="5" y="45.4" width="3.5" height="1.2" fill="#aaa"/><rect x="5" y="41.8" width="3.5" height="1.2" fill="#aaa"/><rect x="5" y="38.2" width="3.5" height="1.2" fill="#aaa"/><rect x="5" y="34.6" width="3.5" height="1.2" fill="#aaa"/><rect x="5" y="30.9" width="3.5" height="1.2" fill="#aaa"/><rect x="5" y="27.3" width="3.5" height="1.2" fill="#aaa"/><rect x="5" y="23.7" width="3.5" height="1.2" fill="#aaa"/><rect x="5" y="20.1" width="3.5" height="1.2" fill="#aaa"/><rect x="5" y="16.5" width="3.5" height="1.2" fill="#aaa"/><rect x="14.6" y="47.5" width="5.8" height="2.1" fill="#4472c4"/><rect x="14.6" y="46.0" width="5.8" height="1.5" fill="#ed7d31"/><rect x="14.6" y="44.8" width="5.8" height="1.3" fill="#a5a5a5"/><rect x="14.0" y="54.0" width="7" height="1.3" fill="#aaa"/><rect x="30.0" y="47.5" width="5.8" height="2.1" fill="#4472c4"/><rect x="30.0" y="45.8" width="5.8" height="1.7" fill="#ed7d31"/><rect x="30.0" y="44.6" width="5.8" height="1.3" fill="#a5a5a5"/><rect x="30.0" y="39.7" width="5.8" height="4.8" fill="#ffc000"/><rect x="29.4" y="54.0" width="7" height="1.3" fill="#aaa"/><rect x="45.4" y="46.5" width="5.8" height="3.1" fill="#4472c4"/><rect x="45.4" y="43.9" width="5.8" height="2.5" fill="#ed7d31"/><rect x="45.4" y="42.1" width="5.8" height="1.9" fill="#a5a5a5"/><rect x="45.4" y="32.2" width="5.8" height="9.9" fill="#ffc000"/><rect x="44.8" y="54.0" width="7" height="1.3" fill="#aaa"/><rect x="60.8" y="46.0" width="5.8" height="3.6" fill="#4472c4"/><rect x="60.8" y="43.5" width="5.8" height="2.5" fill="#ed7d31"/><rect x="60.8" y="41.2" width="5.8" height="2.3" fill="#a5a5a5"/><rect x="60.8" y="23.8" width="5.8" height="17.4" fill="#ffc000"/><rect x="60.2" y="54.0" width="7" height="1.3" fill="#aaa"/><rect x="76.2" y="46.9" width="5.8" height="2.7" fill="#4472c4"/><rect x="76.2" y="44.6" width="5.8" height="2.3" fill="#ed7d31"/><rect x="76.2" y="42.9" width="5.8" height="1.7" fill="#a5a5a5"/><rect x="76.2" y="17.1" width="5.8" height="25.8" fill="#ffc000"/><rect x="75.6" y="54.0" width="7" height="1.3" fill="#aaa"/><rect x="91.6" y="36.0" width="5.8" height="13.6" fill="#4472c4"/><rect x="91.6" y="25.5" width="5.8" height="10.5" fill="#ed7d31"/><rect x="91.6" y="17.1" width="5.8" height="8.4" fill="#a5a5a5"/><rect x="91.0" y="54.0" width="7" height="1.3" fill="#aaa"/><rect x="39.0" y="5" width="28" height="2.2" fill="#ddd" opacity="0.9"/><rect x="27.0" y="58" width="1.8" height="1.8" fill="#4472c4"/><rect x="29.6" y="58.4" width="7" height="1.1" fill="#aaa"/><rect x="40.5" y="58" width="1.8" height="1.8" fill="#ed7d31"/><rect x="43.1" y="58.4" width="7" height="1.1" fill="#aaa"/><rect x="54.0" y="58" width="1.8" height="1.8" fill="#a5a5a5"/><rect x="56.6" y="58.4" width="7" height="1.1" fill="#aaa"/><rect x="67.5" y="58" width="1.8" height="1.8" fill="#ffc000"/><rect x="70.1" y="58.4" width="9" height="1.1" fill="#aaa"/></svg>
<div class="t" style="left:615.0px;top:137.9px;font-size:14.3px;color:#444;letter-spacing:-0.45px;">Chart Styles</div>
<div class="r" style="left:1160px;top:45px;width:1px;height:106px;background:#d8d8d8;"></div>
<svg class="r" style="left:1189px;top:48px;" width="41" height="36" viewBox="0 0 41 36">
<rect x="0.5" y="0.5" width="39" height="34" fill="#fdfdfd" stroke="#bdbdbd"/>
<rect x="0.5" y="0.5" width="39" height="5.5" fill="#b9b9b9"/>
<path d="M0.5 12.5h39M0.5 19h39M0.5 26h39M10 6v28.5M20 6v28.5M30 6v28.5" stroke="#cfcfcf" stroke-width="0.8"/>
<path d="M14 24c0-6 3-9 9-9" fill="none" stroke="#a9a9a9" stroke-width="1.6"/>
<path d="M20 12l4 3-4 3M11 21l3 4 3-4" fill="none" stroke="#a9a9a9" stroke-width="1.6"/>
</svg>
<div class="t" style="left:1167.0px;top:92.5px;font-size:15.5px;color:#a6a6a6;">Switch Row/</div>
<div class="t" style="left:1182.6px;top:113.9px;font-size:15.5px;color:#a6a6a6;">Column</div>
<svg class="r" style="left:1260px;top:50px;" width="42" height="39" viewBox="0 0 42 39">
<rect x="0.5" y="0.5" width="36" height="31" fill="#fff" stroke="#8a8a8a"/>
<rect x="0.5" y="0.5" width="36" height="5" fill="#666"/>
<path d="M0.5 12h36M0.5 18h36M0.5 24h36M9.5 5.5v26M18.5 5.5v26M27.5 5.5v26" stroke="#999" stroke-width="0.8"/>
<path d="M10 12v12h8M10 12h17v6" fill="none" stroke="#e8a33d" stroke-width="1.2"/>
<rect x="19" y="19" width="22" height="19" fill="#fff" stroke="#6a6a6a"/>
<path d="M23 36V28h3v8M28 36V25h3v11M33 36V30h3v6" fill="#e0e0e0" stroke="#6a6a6a" stroke-width="0.9"/>
</svg>
<div class="t" style="left:1260.0px;top:92.5px;font-size:15.5px;color:#363636;">Select</div>
<div class="t" style="left:1263.8px;top:113.9px;font-size:15.5px;color:#363636;">Data</div>
<div class="t" style="left:1221.5px;top:137.9px;font-size:14.3px;color:#444;letter-spacing:-0.45px;">Data</div>
<div class="r" style="left:1309px;top:45px;width:1px;height:106px;background:#d8d8d8;"></div>
<svg class="r" style="left:1330px;top:45px;" width="45" height="42" viewBox="0 0 45 42">
<rect x="5" y="14.7" width="9.6" height="23" fill="#4a7cc4"/>
<rect x="16.7" y="3.7" width="9.3" height="34" fill="#f5c96a"/>
<rect x="28" y="10.9" width="9.7" height="26.8" fill="#6b6b6b"/>
</svg>
<div class="t" style="left:1326.0px;top:92.5px;font-size:15.5px;color:#363636;">Change</div>
<div class="t" style="left:1315.0px;top:113.9px;font-size:15.5px;color:#363636;">Chart Type</div>
<div class="t" style="left:1338.0px;top:137.9px;font-size:14.3px;color:#444;letter-spacing:-0.45px;">Type</div>
<div class="r" style="left:1395px;top:45px;width:1px;height:106px;background:#d8d8d8;"></div>
<svg class="r" style="left:1405px;top:49px;" width="38" height="34" viewBox="0 0 38 34">
<rect x="1" y="1" width="35" height="27" fill="#fff" stroke="#777" stroke-width="1.1"/>
<path d="M1 28l5 4h9l3-4" fill="#fff" stroke="#777" stroke-width="1.1"/>
<rect x="7" y="14" width="5" height="12" fill="#d9d9d9" stroke="#777" stroke-width="0.9"/>
<rect x="14" y="5" width="5" height="21" fill="#d9d9d9" stroke="#777" stroke-width="0.9"/>
<rect x="21" y="10" width="5" height="16" fill="#d9d9d9" stroke="#777" stroke-width="0.9"/>
<rect x="27" y="15" width="5" height="11" fill="#d9d9d9" stroke="#777" stroke-width="0.9"/>
</svg>
<div class="t" style="left:1405.0px;top:92.5px;font-size:15.5px;color:#363636;">Move</div>
<div class="t" style="left:1406.7px;top:113.9px;font-size:15.5px;color:#363636;">Chart</div>
<div class="t" style="left:1398.5px;top:137.9px;font-size:14.3px;color:#444;letter-spacing:-0.45px;">Location</div>
<div class="r" style="left:1454px;top:45px;width:1px;height:106px;background:#d8d8d8;"></div>
<div class="r" style="left:0px;top:155px;width:1560px;height:110px;background:#e6e6e6;"></div>
<div class="r" style="left:1px;top:169px;width:134px;height:31px;background:#fff;border:1px solid #c6c6c6;"></div>
<div class="t" style="left:7.5px;top:177.0px;font-size:16.5px;color:#333;">Chart 1</div>
<svg class="r" style="left:117px;top:181px;" width="9" height="6" viewBox="0 0 9 6"><path d="M0 0h8l-4 4.5z" fill="#555"/></svg>
<div class="r" style="left:152px;top:177px;width:3px;height:3px;background:#9aa0a8;"></div>
<div class="r" style="left:152px;top:182.5px;width:3px;height:3px;background:#9aa0a8;"></div>
<div class="r" style="left:152px;top:188px;width:3px;height:3px;background:#9aa0a8;"></div>
<div class="r" style="left:174px;top:169px;width:144px;height:31px;background:#fff;border:1px solid #c6c6c6;"></div>
<svg class="r" style="left:189px;top:176px;" width="18" height="17" viewBox="0 0 18 17"><path d="M2 2l13 13M15 2L2 15" stroke="#bdbdbd" stroke-width="1.8"/></svg>
<svg class="r" style="left:236px;top:176px;" width="20" height="17" viewBox="0 0 20 17"><path d="M2 9l5 6L18 2" fill="none" stroke="#c6c6c6" stroke-width="2.2"/></svg>
<div class="t" style="left:284.0px;top:173.1px;font-size:20px;color:#4a4a4a;font-weight:700;font-style:italic;font-family:'Liberation Serif', serif;">fx</div>
<div class="r" style="left:321px;top:169px;width:1240px;height:82px;background:#fff;border:1px solid #c6c6c6;border-right:none;"></div>
<div class="t" style="left:336.0px;top:177.0px;font-size:16.5px;color:#222;letter-spacing:0.5px;">=SERIES('Stacked Waterfall Chart'!$B$7,'Stacked Waterfall Chart'!$C$3:$H$3,'Stacked Waterfall Chart'!$C$7:$H$7,1)</div>
<div class="r" style="left:0px;top:264px;width:1560px;height:25px;background:#e6e6e6;"></div>
<div class="r" style="left:67px;top:264px;width:1px;height:24px;background:#c4c4c4;"></div>
<div class="t" style="left:-252.0px;width:600px;text-align:center;top:270.0px;font-size:16.5px;color:#222;">A</div>
<div class="r" style="left:180px;top:264px;width:1px;height:24px;background:#c4c4c4;"></div>
<div class="t" style="left:-176.8px;width:600px;text-align:center;top:270.0px;font-size:16.5px;color:#222;">B</div>
<div class="r" style="left:273px;top:264px;width:1px;height:24px;background:#c4c4c4;"></div>
<div class="t" style="left:-73.8px;width:600px;text-align:center;top:270.0px;font-size:16.5px;color:#222;">C</div>
<div class="r" style="left:376px;top:264px;width:1px;height:24px;background:#c4c4c4;"></div>
<div class="t" style="left:24.5px;width:600px;text-align:center;top:270.0px;font-size:16.5px;color:#222;">D</div>
<div class="r" style="left:463px;top:264px;width:1px;height:24px;background:#c4c4c4;"></div>
<div class="t" style="left:119.5px;width:600px;text-align:center;top:270.0px;font-size:16.5px;color:#222;">E</div>
<div class="r" style="left:551px;top:264px;width:1px;height:24px;background:#c4c4c4;"></div>
<div class="t" style="left:207.0px;width:600px;text-align:center;top:270.0px;font-size:16.5px;color:#222;">F</div>
<div class="r" style="left:645px;top:264px;width:1px;height:24px;background:#c4c4c4;"></div>
<div class="t" style="left:298.0px;width:600px;text-align:center;top:270.0px;font-size:16.5px;color:#222;">G</div>
<div class="r" style="left:748px;top:264px;width:1px;height:24px;background:#c4c4c4;"></div>
<div class="t" style="left:396.5px;width:600px;text-align:center;top:270.0px;font-size:16.5px;color:#222;">H</div>
<div class="r" style="left:842px;top:264px;width:1px;height:24px;background:#c4c4c4;"></div>
<div class="t" style="left:495.0px;width:600px;text-align:center;top:270.0px;font-size:16.5px;color:#222;">I</div>
<div class="r" style="left:937px;top:264px;width:1px;height:24px;background:#c4c4c4;"></div>
<div class="t" style="left:589.5px;width:600px;text-align:center;top:270.0px;font-size:16.5px;color:#222;">J</div>
<div class="r" style="left:1030px;top:264px;width:1px;height:24px;background:#c4c4c4;"></div>
<div class="t" style="left:683.5px;width:600px;text-align:center;top:270.0px;font-size:16.5px;color:#222;">K</div>
<div class="r" style="left:1124px;top:264px;width:1px;height:24px;background:#c4c4c4;"></div>
<div class="t" style="left:777.0px;width:600px;text-align:center;top:270.0px;font-size:16.5px;color:#222;">L</div>
<div class="r" style="left:1218px;top:264px;width:1px;height:24px;background:#c4c4c4;"></div>
<div class="t" style="left:871.0px;width:600px;text-align:center;top:270.0px;font-size:16.5px;color:#222;">M</div>
<div class="r" style="left:1312px;top:264px;width:1px;height:24px;background:#c4c4c4;"></div>
<div class="t" style="left:965.0px;width:600px;text-align:center;top:270.0px;font-size:16.5px;color:#222;">N</div>
<div class="r" style="left:1405px;top:264px;width:1px;height:24px;background:#c4c4c4;"></div>
<div class="t" style="left:1058.5px;width:600px;text-align:center;top:270.0px;font-size:16.5px;color:#222;">O</div>
<div class="r" style="left:1499px;top:264px;width:1px;height:24px;background:#c4c4c4;"></div>
<div class="t" style="left:1152.0px;width:600px;text-align:center;top:270.0px;font-size:16.5px;color:#222;">P</div>
<div class="r" style="left:1593px;top:264px;width:1px;height:24px;background:#c4c4c4;"></div>
<div class="t" style="left:1246.0px;width:600px;text-align:center;top:270.0px;font-size:16.5px;color:#222;">Q</div>
<div class="r" style="left:29px;top:264px;width:1px;height:503px;background:#9e9e9e;"></div>
<div class="r" style="left:0px;top:288px;width:1560px;height:2px;background:#b6babe;"></div>
<svg class="r" style="left:7px;top:267px;" width="21" height="20" viewBox="0 0 21 20"><path d="M20 1v18H1z" fill="#b4b4b4"/></svg>
<div class="r" style="left:0px;top:290px;width:29px;height:477px;background:#e6e6e6;"></div>
<div class="r" style="left:0px;top:313px;width:29px;height:1px;background:#b8b8b8;"></div>
<div class="t" style="left:-287.2px;width:600px;text-align:center;top:294.5px;font-size:16.5px;color:#222;">1</div>
<div class="r" style="left:0px;top:339px;width:29px;height:1px;background:#b8b8b8;"></div>
<div class="t" style="left:-287.2px;width:600px;text-align:center;top:320.3px;font-size:16.5px;color:#222;">2</div>
<div class="r" style="left:0px;top:365px;width:29px;height:1px;background:#b8b8b8;"></div>
<div class="t" style="left:-287.2px;width:600px;text-align:center;top:346.8px;font-size:16.5px;color:#222;">3</div>
<div class="r" style="left:0px;top:391px;width:29px;height:1px;background:#b8b8b8;"></div>
<div class="t" style="left:-287.2px;width:600px;text-align:center;top:372.8px;font-size:16.5px;color:#222;">4</div>
<div class="r" style="left:0px;top:417px;width:29px;height:1px;background:#b8b8b8;"></div>
<div class="t" style="left:-287.2px;width:600px;text-align:center;top:398.3px;font-size:16.5px;color:#222;">5</div>
<div class="r" style="left:0px;top:443px;width:29px;height:1px;background:#b8b8b8;"></div>
<div class="t" style="left:-287.2px;width:600px;text-align:center;top:424.3px;font-size:16.5px;color:#222;">6</div>
<div class="r" style="left:0px;top:469px;width:29px;height:1px;background:#b8b8b8;"></div>
<div class="t" style="left:-287.2px;width:600px;text-align:center;top:450.8px;font-size:16.5px;color:#222;">7</div>
<div class="r" style="left:0px;top:495px;width:29px;height:1px;background:#b8b8b8;"></div>
<div class="t" style="left:-287.2px;width:600px;text-align:center;top:476.7px;font-size:16.5px;color:#222;">8</div>
<div class="r" style="left:0px;top:521px;width:29px;height:1px;background:#b8b8b8;"></div>
<div class="t" style="left:-287.2px;width:600px;text-align:center;top:502.1px;font-size:16.5px;color:#222;">9</div>
<div class="r" style="left:0px;top:546px;width:29px;height:1px;background:#b8b8b8;"></div>
<div class="t" style="left:-287.2px;width:600px;text-align:center;top:527.6px;font-size:16.5px;color:#222;">10</div>
<div class="r" style="left:0px;top:572px;width:29px;height:1px;background:#b8b8b8;"></div>
<div class="t" style="left:-287.2px;width:600px;text-align:center;top:553.0px;font-size:16.5px;color:#222;">11</div>
<div class="r" style="left:0px;top:597px;width:29px;height:1px;background:#b8b8b8;"></div>
<div class="t" style="left:-287.2px;width:600px;text-align:center;top:578.5px;font-size:16.5px;color:#222;">12</div>
<div class="r" style="left:0px;top:623px;width:29px;height:1px;background:#b8b8b8;"></div>
<div class="t" style="left:-287.2px;width:600px;text-align:center;top:603.9px;font-size:16.5px;color:#222;">13</div>
<div class="r" style="left:0px;top:648px;width:29px;height:1px;background:#b8b8b8;"></div>
<div class="t" style="left:-287.2px;width:600px;text-align:center;top:629.4px;font-size:16.5px;color:#222;">14</div>
<div class="r" style="left:0px;top:673px;width:29px;height:1px;background:#b8b8b8;"></div>
<div class="t" style="left:-287.2px;width:600px;text-align:center;top:654.8px;font-size:16.5px;color:#222;">15</div>
<div class="r" style="left:0px;top:699px;width:29px;height:1px;background:#b8b8b8;"></div>
<div class="t" style="left:-287.2px;width:600px;text-align:center;top:680.3px;font-size:16.5px;color:#222;">16</div>
<div class="r" style="left:0px;top:724px;width:29px;height:1px;background:#b8b8b8;"></div>
<div class="t" style="left:-287.2px;width:600px;text-align:center;top:705.7px;font-size:16.5px;color:#222;">17</div>
<div class="r" style="left:0px;top:749px;width:29px;height:1px;background:#b8b8b8;"></div>
<div class="t" style="left:-287.2px;width:600px;text-align:center;top:730.7px;font-size:16.5px;color:#222;">18</div>
<div class="r" style="left:0px;top:775px;width:29px;height:1px;background:#b8b8b8;"></div>
<div class="t" style="left:-287.2px;width:600px;text-align:center;top:756.3px;font-size:16.5px;color:#222;">19</div>
<div class="r" style="left:67px;top:340px;width:113px;height:26px;background:#375623;"></div>
<div class="t" style="left:-176.8px;width:600px;text-align:center;top:346.3px;font-size:16.5px;color:#fff;font-weight:700;">City</div>
<div class="r" style="left:180px;top:340px;width:93px;height:26px;background:#375623;"></div>
<div class="t" style="left:-73.8px;width:600px;text-align:center;top:346.3px;font-size:16.5px;color:#fff;font-weight:700;">Opening</div>
<div class="r" style="left:273px;top:340px;width:103px;height:26px;background:#375623;"></div>
<div class="t" style="left:24.5px;width:600px;text-align:center;top:346.3px;font-size:16.5px;color:#fff;font-weight:700;">Qtr1</div>
<div class="r" style="left:376px;top:340px;width:87px;height:26px;background:#375623;"></div>
<div class="t" style="left:119.5px;width:600px;text-align:center;top:346.3px;font-size:16.5px;color:#fff;font-weight:700;">Qtr2</div>
<div class="r" style="left:463px;top:340px;width:88px;height:26px;background:#375623;"></div>
<div class="t" style="left:207.0px;width:600px;text-align:center;top:346.3px;font-size:16.5px;color:#fff;font-weight:700;">Qtr3</div>
<div class="r" style="left:551px;top:340px;width:94px;height:26px;background:#375623;"></div>
<div class="t" style="left:298.0px;width:600px;text-align:center;top:346.3px;font-size:16.5px;color:#fff;font-weight:700;">Qtr4</div>
<div class="r" style="left:645px;top:340px;width:103px;height:26px;background:#375623;"></div>
<div class="t" style="left:396.5px;width:600px;text-align:center;top:346.3px;font-size:16.5px;color:#fff;font-weight:700;">Closing</div>
<div class="r" style="left:67px;top:366px;width:113px;height:26px;background:#d7d8da;"></div>
<div class="t" style="left:-176.8px;width:600px;text-align:center;top:372.3px;font-size:16.5px;color:#111;font-weight:700;">Delhi</div>
<div class="r" style="left:180px;top:366px;width:93px;height:26px;background:#fff;"></div>
<div class="t" style="left:-73.8px;width:600px;text-align:center;top:372.3px;font-size:16.5px;color:#111;">100</div>
<div class="r" style="left:273px;top:366px;width:103px;height:26px;background:#fff;"></div>
<div class="t" style="left:24.5px;width:600px;text-align:center;top:372.3px;font-size:16.5px;color:#111;">100</div>
<div class="r" style="left:376px;top:366px;width:87px;height:26px;background:#fff;"></div>
<div class="t" style="left:119.5px;width:600px;text-align:center;top:372.3px;font-size:16.5px;color:#111;">150</div>
<div class="r" style="left:463px;top:366px;width:88px;height:26px;background:#fff;"></div>
<div class="t" style="left:207.0px;width:600px;text-align:center;top:372.3px;font-size:16.5px;color:#111;">170</div>
<div class="r" style="left:551px;top:366px;width:94px;height:26px;background:#fff;"></div>
<div class="t" style="left:298.0px;width:600px;text-align:center;top:372.3px;font-size:16.5px;color:#111;">130</div>
<div class="r" style="left:645px;top:366px;width:103px;height:26px;background:#fff;"></div>
<div class="t" style="left:396.5px;width:600px;text-align:center;top:372.3px;font-size:16.5px;color:#111;">650</div>
<div class="r" style="left:67px;top:392px;width:113px;height:26px;background:#d7d8da;"></div>
<div class="t" style="left:-176.8px;width:600px;text-align:center;top:397.8px;font-size:16.5px;color:#111;font-weight:700;">Noida</div>
<div class="r" style="left:180px;top:392px;width:93px;height:26px;background:#fff;"></div>
<div class="t" style="left:-73.8px;width:600px;text-align:center;top:397.8px;font-size:16.5px;color:#111;">70</div>
<div class="r" style="left:273px;top:392px;width:103px;height:26px;background:#fff;"></div>
<div class="t" style="left:24.5px;width:600px;text-align:center;top:397.8px;font-size:16.5px;color:#111;">80</div>
<div class="r" style="left:376px;top:392px;width:87px;height:26px;background:#fff;"></div>
<div class="t" style="left:119.5px;width:600px;text-align:center;top:397.8px;font-size:16.5px;color:#111;">120</div>
<div class="r" style="left:463px;top:392px;width:88px;height:26px;background:#fff;"></div>
<div class="t" style="left:207.0px;width:600px;text-align:center;top:397.8px;font-size:16.5px;color:#111;">120</div>
<div class="r" style="left:551px;top:392px;width:94px;height:26px;background:#fff;"></div>
<div class="t" style="left:298.0px;width:600px;text-align:center;top:397.8px;font-size:16.5px;color:#111;">110</div>
<div class="r" style="left:645px;top:392px;width:103px;height:26px;background:#fff;"></div>
<div class="t" style="left:396.5px;width:600px;text-align:center;top:397.8px;font-size:16.5px;color:#111;">500</div>
<div class="r" style="left:67px;top:418px;width:113px;height:26px;background:#d7d8da;"></div>
<div class="t" style="left:-176.8px;width:600px;text-align:center;top:423.8px;font-size:16.5px;color:#111;font-weight:700;">Gurugram</div>
<div class="r" style="left:180px;top:418px;width:93px;height:26px;background:#fff;"></div>
<div class="t" style="left:-73.8px;width:600px;text-align:center;top:423.8px;font-size:16.5px;color:#111;">60</div>
<div class="r" style="left:273px;top:418px;width:103px;height:26px;background:#fff;"></div>
<div class="t" style="left:24.5px;width:600px;text-align:center;top:423.8px;font-size:16.5px;color:#111;">60</div>
<div class="r" style="left:376px;top:418px;width:87px;height:26px;background:#fff;"></div>
<div class="t" style="left:119.5px;width:600px;text-align:center;top:423.8px;font-size:16.5px;color:#111;">90</div>
<div class="r" style="left:463px;top:418px;width:88px;height:26px;background:#fff;"></div>
<div class="t" style="left:207.0px;width:600px;text-align:center;top:423.8px;font-size:16.5px;color:#111;">110</div>
<div class="r" style="left:551px;top:418px;width:94px;height:26px;background:#fff;"></div>
<div class="t" style="left:298.0px;width:600px;text-align:center;top:423.8px;font-size:16.5px;color:#111;">80</div>
<div class="r" style="left:645px;top:418px;width:103px;height:26px;background:#fff;"></div>
<div class="t" style="left:396.5px;width:600px;text-align:center;top:423.8px;font-size:16.5px;color:#111;">400</div>
<div class="r" style="left:67px;top:444px;width:113px;height:26px;background:#d7d8da;"></div>
<div class="t" style="left:-176.8px;width:600px;text-align:center;top:450.3px;font-size:16.5px;color:#111;font-weight:700;">Accumulated</div>
<div class="r" style="left:180px;top:444px;width:93px;height:26px;background:#e8eef7;"></div>
<div class="t" style="left:-73.8px;width:600px;text-align:center;top:450.3px;font-size:16.5px;color:#111;font-weight:700;">0</div>
<div class="r" style="left:273px;top:444px;width:103px;height:26px;background:#e8eef7;"></div>
<div class="t" style="left:24.5px;width:600px;text-align:center;top:450.3px;font-size:16.5px;color:#111;font-weight:700;">230</div>
<div class="r" style="left:376px;top:444px;width:87px;height:26px;background:#e8eef7;"></div>
<div class="t" style="left:119.5px;width:600px;text-align:center;top:450.3px;font-size:16.5px;color:#111;font-weight:700;">470</div>
<div class="r" style="left:463px;top:444px;width:88px;height:26px;background:#e8eef7;"></div>
<div class="t" style="left:207.0px;width:600px;text-align:center;top:450.3px;font-size:16.5px;color:#111;font-weight:700;">830</div>
<div class="r" style="left:551px;top:444px;width:94px;height:26px;background:#e8eef7;"></div>
<div class="t" style="left:298.0px;width:600px;text-align:center;top:450.3px;font-size:16.5px;color:#111;font-weight:700;">1230</div>
<div class="r" style="left:645px;top:444px;width:103px;height:26px;background:#e8eef7;"></div>
<div class="r" style="left:66px;top:340px;width:2px;height:131px;background:#1a1a1a;"></div>
<div class="r" style="left:180px;top:340px;width:1px;height:131px;background:#1a1a1a;"></div>
<div class="r" style="left:273px;top:340px;width:1px;height:131px;background:#1a1a1a;"></div>
<div class="r" style="left:376px;top:340px;width:1px;height:131px;background:#1a1a1a;"></div>
<div class="r" style="left:463px;top:340px;width:1px;height:131px;background:#1a1a1a;"></div>
<div class="r" style="left:551px;top:340px;width:1px;height:131px;background:#1a1a1a;"></div>
<div class="r" style="left:645px;top:340px;width:1px;height:131px;background:#1a1a1a;"></div>
<div class="r" style="left:747px;top:340px;width:2px;height:131px;background:#1a1a1a;"></div>
<div class="r" style="left:67px;top:339px;width:682px;height:2px;background:#1a1a1a;"></div>
<div class="r" style="left:67px;top:365px;width:682px;height:2px;background:#1a1a1a;"></div>
<div class="r" style="left:67px;top:392px;width:682px;height:1px;background:#1a1a1a;"></div>
<div class="r" style="left:67px;top:417px;width:682px;height:2px;background:#6e6e6e;"></div>
<div class="r" style="left:67px;top:444px;width:682px;height:1px;background:#1a1a1a;"></div>
<div class="r" style="left:67px;top:469px;width:682px;height:2px;background:#1a1a1a;"></div>
<div class="r" style="left:179px;top:340px;width:570px;height:2px;background:#7232a8;"></div>
<div class="r" style="left:179px;top:366px;width:570px;height:2px;background:#7232a8;"></div>
<div class="r" style="left:179px;top:340px;width:2px;height:28px;background:#7232a8;"></div>
<div class="r" style="left:747px;top:340px;width:2px;height:28px;background:#7232a8;"></div>
<div class="r" style="left:177px;top:339px;width:5px;height:5px;background:#7232a8;outline:1px solid #fff;"></div>
<div class="r" style="left:746px;top:339px;width:5px;height:5px;background:#7232a8;outline:1px solid #fff;"></div>
<div class="r" style="left:177px;top:365px;width:5px;height:5px;background:#7232a8;outline:1px solid #fff;"></div>
<div class="r" style="left:746px;top:365px;width:5px;height:5px;background:#7232a8;outline:1px solid #fff;"></div>
<div class="r" style="left:66px;top:443px;width:115px;height:2px;background:#d13438;"></div>
<div class="r" style="left:66px;top:469px;width:115px;height:2px;background:#d13438;"></div>
<div class="r" style="left:66px;top:443px;width:2px;height:28px;background:#d13438;"></div>
<div class="r" style="left:178px;top:443px;width:2px;height:28px;background:#d13438;"></div>
<div class="r" style="left:64px;top:442px;width:5px;height:5px;background:#d13438;outline:1px solid #fff;"></div>
<div class="r" style="left:177px;top:442px;width:5px;height:5px;background:#d13438;outline:1px solid #fff;"></div>
<div class="r" style="left:64px;top:468px;width:5px;height:5px;background:#d13438;outline:1px solid #fff;"></div>
<div class="r" style="left:177px;top:468px;width:5px;height:5px;background:#d13438;outline:1px solid #fff;"></div>
<div class="r" style="left:180px;top:443px;width:569px;height:2px;background:#3b6fc4;"></div>
<div class="r" style="left:180px;top:469px;width:569px;height:2px;background:#3b6fc4;"></div>
<div class="r" style="left:180px;top:443px;width:2px;height:28px;background:#3b6fc4;"></div>
<div class="r" style="left:747px;top:443px;width:2px;height:28px;background:#3b6fc4;"></div>
<div class="r" style="left:177px;top:442px;width:5px;height:5px;background:#3b6fc4;outline:1px solid #fff;"></div>
<div class="r" style="left:746px;top:442px;width:5px;height:5px;background:#3b6fc4;outline:1px solid #fff;"></div>
<div class="r" style="left:177px;top:468px;width:5px;height:5px;background:#3b6fc4;outline:1px solid #fff;"></div>
<div class="r" style="left:746px;top:468px;width:5px;height:5px;background:#3b6fc4;outline:1px solid #fff;"></div>
<div class="r" style="left:783px;top:317px;width:634px;height:380px;background:#fff;border:2px solid #a0a0a0;"></div>
<div class="t" style="left:800.0px;width:600px;text-align:center;top:334.9px;font-size:22px;color:#595959;">Chart Title</div>
<div class="r" style="left:842px;top:615px;width:554px;height:1px;background:#d9d9d9;"></div>
<div class="t" style="left:726px;width:100px;text-align:right;top:607.2px;font-size:14.5px;color:#595959">0</div>
<div class="r" style="left:842px;top:589px;width:554px;height:1px;background:#d9d9d9;"></div>
<div class="t" style="left:726px;width:100px;text-align:right;top:581.3px;font-size:14.5px;color:#595959">200</div>
<div class="r" style="left:842px;top:563px;width:554px;height:1px;background:#d9d9d9;"></div>
<div class="t" style="left:726px;width:100px;text-align:right;top:555.3px;font-size:14.5px;color:#595959">400</div>
<div class="r" style="left:842px;top:537px;width:554px;height:1px;background:#d9d9d9;"></div>
<div class="t" style="left:726px;width:100px;text-align:right;top:529.4px;font-size:14.5px;color:#595959">600</div>
<div class="r" style="left:842px;top:511px;width:554px;height:1px;background:#d9d9d9;"></div>
<div class="t" style="left:726px;width:100px;text-align:right;top:503.4px;font-size:14.5px;color:#595959">800</div>
<div class="r" style="left:842px;top:485px;width:554px;height:1px;background:#d9d9d9;"></div>
<div class="t" style="left:726px;width:100px;text-align:right;top:477.5px;font-size:14.5px;color:#595959">1000</div>
<div class="r" style="left:842px;top:459px;width:554px;height:1px;background:#d9d9d9;"></div>
<div class="t" style="left:726px;width:100px;text-align:right;top:451.5px;font-size:14.5px;color:#595959">1200</div>
<div class="r" style="left:842px;top:433px;width:554px;height:1px;background:#d9d9d9;"></div>
<div class="t" style="left:726px;width:100px;text-align:right;top:425.6px;font-size:14.5px;color:#595959">1400</div>
<div class="r" style="left:842px;top:407px;width:554px;height:1px;background:#d9d9d9;"></div>
<div class="t" style="left:726px;width:100px;text-align:right;top:399.6px;font-size:14.5px;color:#595959">1600</div>
<div class="r" style="left:842px;top:381px;width:554px;height:1px;background:#d9d9d9;"></div>
<div class="t" style="left:726px;width:100px;text-align:right;top:373.6px;font-size:14.5px;color:#595959">1800</div>
<div class="r" style="left:869.0px;top:602.0px;width:37px;height:13.0px;background:#4472c4;"></div>
<div class="r" style="left:869.0px;top:592.9px;width:37px;height:9.1px;background:#ed7d31;"></div>
<div class="r" style="left:869.0px;top:585.2px;width:37px;height:7.8px;background:#a5a5a5;"></div>
<div class="t" style="left:587.5px;width:600px;text-align:center;top:627.7px;font-size:14.5px;color:#595959;">Opening</div>
<div class="r" style="left:962.0px;top:585.2px;width:37px;height:29.8px;background:#ffc000;border:1px solid #b9b6a0;"></div>
<div class="r" style="left:962.0px;top:572.2px;width:37px;height:13.0px;background:#4472c4;"></div>
<div class="r" style="left:962.0px;top:561.8px;width:37px;height:10.4px;background:#ed7d31;"></div>
<div class="r" style="left:962.0px;top:554.0px;width:37px;height:7.8px;background:#a5a5a5;"></div>
<div class="t" style="left:680.5px;width:600px;text-align:center;top:627.7px;font-size:14.5px;color:#595959;">Qtr1</div>
<div class="r" style="left:1054.6px;top:554.0px;width:37px;height:61.0px;background:#ffc000;border:1px solid #b9b6a0;"></div>
<div class="r" style="left:1054.6px;top:534.5px;width:37px;height:19.5px;background:#4472c4;"></div>
<div class="r" style="left:1054.6px;top:519.0px;width:37px;height:15.6px;background:#ed7d31;"></div>
<div class="r" style="left:1054.6px;top:507.3px;width:37px;height:11.7px;background:#a5a5a5;"></div>
<div class="t" style="left:773.1px;width:600px;text-align:center;top:627.7px;font-size:14.5px;color:#595959;">Qtr2</div>
<div class="r" style="left:1146.4px;top:507.3px;width:37px;height:107.7px;background:#ffc000;border:1px solid #b9b6a0;"></div>
<div class="r" style="left:1146.4px;top:485.2px;width:37px;height:22.1px;background:#4472c4;"></div>
<div class="r" style="left:1146.4px;top:469.6px;width:37px;height:15.6px;background:#ed7d31;"></div>
<div class="r" style="left:1146.4px;top:455.4px;width:37px;height:14.3px;background:#a5a5a5;"></div>
<div class="t" style="left:864.9px;width:600px;text-align:center;top:627.7px;font-size:14.5px;color:#595959;">Qtr3</div>
<div class="r" style="left:1238.6px;top:455.4px;width:37px;height:159.6px;background:#ffc000;border:1px solid #b9b6a0;"></div>
<div class="r" style="left:1238.6px;top:438.5px;width:37px;height:16.9px;background:#4472c4;"></div>
<div class="r" style="left:1238.6px;top:424.2px;width:37px;height:14.3px;background:#ed7d31;"></div>
<div class="r" style="left:1238.6px;top:413.8px;width:37px;height:10.4px;background:#a5a5a5;"></div>
<div class="t" style="left:957.1px;width:600px;text-align:center;top:627.7px;font-size:14.5px;color:#595959;">Qtr4</div>
<div class="r" style="left:1331.0px;top:530.6px;width:37px;height:84.4px;background:#4472c4;"></div>
<div class="r" style="left:1331.0px;top:465.8px;width:37px;height:64.9px;background:#ed7d31;"></div>
<div class="r" style="left:1331.0px;top:413.8px;width:37px;height:51.9px;background:#a5a5a5;"></div>
<div class="t" style="left:1049.5px;width:600px;text-align:center;top:627.7px;font-size:14.5px;color:#595959;">Closing</div>
<div class="t" style="left:587.5px;width:600px;text-align:center;top:607.6px;font-size:15px;color:#404040;">0</div>
<div class="t" style="left:587.5px;width:600px;text-align:center;top:601.1px;font-size:15px;color:#404040;">100</div>
<div class="t" style="left:587.5px;width:600px;text-align:center;top:590.1px;font-size:15px;color:#404040;">70</div>
<div class="t" style="left:587.5px;width:600px;text-align:center;top:581.6px;font-size:15px;color:#404040;">60</div>
<div class="t" style="left:680.5px;width:600px;text-align:center;top:592.7px;font-size:15px;color:#404040;">230</div>
<div class="t" style="left:680.5px;width:600px;text-align:center;top:571.3px;font-size:15px;color:#404040;">100</div>
<div class="t" style="left:680.5px;width:600px;text-align:center;top:559.6px;font-size:15px;color:#404040;">80</div>
<div class="t" style="left:680.5px;width:600px;text-align:center;top:550.5px;font-size:15px;color:#404040;">60</div>
<div class="t" style="left:773.1px;width:600px;text-align:center;top:577.1px;font-size:15px;color:#404040;">470</div>
<div class="t" style="left:773.1px;width:600px;text-align:center;top:536.9px;font-size:15px;color:#404040;">150</div>
<div class="t" style="left:773.1px;width:600px;text-align:center;top:519.4px;font-size:15px;color:#404040;">120</div>
<div class="t" style="left:773.1px;width:600px;text-align:center;top:505.7px;font-size:15px;color:#404040;">90</div>
<div class="t" style="left:864.9px;width:600px;text-align:center;top:553.7px;font-size:15px;color:#404040;">830</div>
<div class="t" style="left:864.9px;width:600px;text-align:center;top:488.9px;font-size:15px;color:#404040;">170</div>
<div class="t" style="left:864.9px;width:600px;text-align:center;top:470.0px;font-size:15px;color:#404040;">120</div>
<div class="t" style="left:864.9px;width:600px;text-align:center;top:455.1px;font-size:15px;color:#404040;">110</div>
<div class="t" style="left:957.1px;width:600px;text-align:center;top:527.8px;font-size:15px;color:#404040;">1230</div>
<div class="t" style="left:957.1px;width:600px;text-align:center;top:439.5px;font-size:15px;color:#404040;">130</div>
<div class="t" style="left:957.1px;width:600px;text-align:center;top:424.0px;font-size:15px;color:#404040;">110</div>
<div class="t" style="left:957.1px;width:600px;text-align:center;top:411.6px;font-size:15px;color:#404040;">80</div>
<div class="t" style="left:1049.5px;width:600px;text-align:center;top:565.4px;font-size:15px;color:#404040;">650</div>
<div class="t" style="left:1049.5px;width:600px;text-align:center;top:490.8px;font-size:15px;color:#404040;">500</div>
<div class="t" style="left:1049.5px;width:600px;text-align:center;top:432.4px;font-size:15px;color:#404040;">400</div>
<div class="r" style="left:957.5px;top:580.7px;width:9px;height:9px;border-radius:50%;background:#dfe6ef;border:1px solid #8aa4c8"></div>
<div class="r" style="left:994.5px;top:580.7px;width:9px;height:9px;border-radius:50%;background:#dfe6ef;border:1px solid #8aa4c8"></div>
<div class="r" style="left:957.5px;top:610.5px;width:9px;height:9px;border-radius:50%;background:#dfe6ef;border:1px solid #8aa4c8"></div>
<div class="r" style="left:994.5px;top:610.5px;width:9px;height:9px;border-radius:50%;background:#dfe6ef;border:1px solid #8aa4c8"></div>
<div class="r" style="left:1050.1px;top:549.5px;width:9px;height:9px;border-radius:50%;background:#dfe6ef;border:1px solid #8aa4c8"></div>
<div class="r" style="left:1087.1px;top:549.5px;width:9px;height:9px;border-radius:50%;background:#dfe6ef;border:1px solid #8aa4c8"></div>
<div class="r" style="left:1050.1px;top:610.5px;width:9px;height:9px;border-radius:50%;background:#dfe6ef;border:1px solid #8aa4c8"></div>
<div class="r" style="left:1087.1px;top:610.5px;width:9px;height:9px;border-radius:50%;background:#dfe6ef;border:1px solid #8aa4c8"></div>
<div class="r" style="left:1141.9px;top:502.8px;width:9px;height:9px;border-radius:50%;background:#dfe6ef;border:1px solid #8aa4c8"></div>
<div class="r" style="left:1178.9px;top:502.8px;width:9px;height:9px;border-radius:50%;background:#dfe6ef;border:1px solid #8aa4c8"></div>
<div class="r" style="left:1141.9px;top:610.5px;width:9px;height:9px;border-radius:50%;background:#dfe6ef;border:1px solid #8aa4c8"></div>
<div class="r" style="left:1178.9px;top:610.5px;width:9px;height:9px;border-radius:50%;background:#dfe6ef;border:1px solid #8aa4c8"></div>
<div class="r" style="left:1234.1px;top:450.9px;width:9px;height:9px;border-radius:50%;background:#dfe6ef;border:1px solid #8aa4c8"></div>
<div class="r" style="left:1271.1px;top:450.9px;width:9px;height:9px;border-radius:50%;background:#dfe6ef;border:1px solid #8aa4c8"></div>
<div class="r" style="left:1234.1px;top:610.5px;width:9px;height:9px;border-radius:50%;background:#dfe6ef;border:1px solid #8aa4c8"></div>
<div class="r" style="left:1271.1px;top:610.5px;width:9px;height:9px;border-radius:50%;background:#dfe6ef;border:1px solid #8aa4c8"></div>
<div class="r" style="left:943px;top:666px;width:8.5px;height:8.5px;background:#ffc000;"></div>
<div class="t" style="left:954.5px;top:662.7px;font-size:14.5px;color:#595959;">Accumulated</div>
<div class="r" style="left:1055.7px;top:666px;width:8.5px;height:8.5px;background:#4472c4;"></div>
<div class="t" style="left:1067.2px;top:662.7px;font-size:14.5px;color:#595959;">Delhi</div>
<div class="r" style="left:1118px;top:666px;width:8.5px;height:8.5px;background:#ed7d31;"></div>
<div class="t" style="left:1129.5px;top:662.7px;font-size:14.5px;color:#595959;">Noida</div>
<div class="r" style="left:1185.7px;top:666px;width:8.5px;height:8.5px;background:#a5a5a5;"></div>
<div class="t" style="left:1197.2px;top:662.7px;font-size:14.5px;color:#595959;">Gurugram</div>
<div class="r" style="left:777.0px;top:311.0px;width:14px;height:14px;border-radius:50%;background:#fff;border:2px solid #8c8c8c"></div>
<div class="r" style="left:1093.0px;top:311.0px;width:14px;height:14px;border-radius:50%;background:#fff;border:2px solid #8c8c8c"></div>
<div class="r" style="left:1409.0px;top:311.0px;width:14px;height:14px;border-radius:50%;background:#fff;border:2px solid #8c8c8c"></div>
<div class="r" style="left:777.0px;top:500.0px;width:14px;height:14px;border-radius:50%;background:#fff;border:2px solid #8c8c8c"></div>
<div class="r" style="left:777.0px;top:689.5px;width:14px;height:14px;border-radius:50%;background:#fff;border:2px solid #8c8c8c"></div>
<div class="r" style="left:1093.0px;top:689.5px;width:14px;height:14px;border-radius:50%;background:#fff;border:2px solid #8c8c8c"></div>
<div class="r" style="left:1409.0px;top:500.0px;width:14px;height:14px;border-radius:50%;background:#fff;border:2px solid #8c8c8c"></div>
<div class="r" style="left:1409.0px;top:689.5px;width:14px;height:14px;border-radius:50%;background:#fff;border:2px solid #8c8c8c"></div>
<div class="r" style="left:1432px;top:317px;width:37px;height:37px;background:#a9aaae;border:1px solid #6f9a7a;"></div>
<svg class="r" style="left:1439px;top:325px;" width="22" height="20" viewBox="0 0 22 20"><path d="M8.5 1.5h5v6h6.5v5h-6.5v6.5h-5v-6.5H2v-5h6.5z" fill="#8fae94"/></svg>
<div class="r" style="left:1432px;top:366px;width:37px;height:37px;background:#fff;border:1px solid #c6c6c6;"></div>
<svg class="r" style="left:1436px;top:370px;" width="30" height="30" viewBox="0 0 30 30"><path d="M24.5 3.5l-0.5 7.5-5 5-3-3z" fill="#6b6b6b"/><path d="M15.5 13.8l3 3-2.6 2.6-3-3z" fill="#6b6b6b"/><path d="M12.5 17.5c2.5-1.5 5.5 0.5 4.5 3.5l-0.8 2H5.5z" fill="#3b72c8"/><path d="M12.5 19.5c1.5-0.5 3 0.5 2.5 2l-0.5 1h-3.5z" fill="#fff"/></svg>
<div class="r" style="left:1479px;top:318px;width:100px;height:260px;background:#fff;border:1px solid #217346;"></div>
<div class="r" style="left:1479px;top:327px;width:1px;height:16px;background:#fff;"></div>
<svg class="r" style="left:1470px;top:326px;" width="11" height="19" viewBox="0 0 11 19"><path d="M9.5 0.5L1 9 9.5 17.5" fill="#fff" stroke="#217346" stroke-width="1"/></svg>
<div class="t" style="left:1492.5px;top:335.5px;font-size:16px;color:#217346;font-weight:700;">Chart Ele</div>
<div class="r" style="left:1496px;top:365.0px;width:15px;height:15px;background:#fff;border:1px solid #6b6b6b"></div>
<svg class="r" style="left:1497px;top:366.0px;" width="13" height="13" viewBox="0 0 13 13"><path d="M2.5 6.5l3 3.2L11 3" fill="none" stroke="#2b6ccf" stroke-width="1.6"/></svg>
<div class="t" style="left:1526.0px;top:366.0px;font-size:15.3px;color:#262626;">Axes</div>
<div class="r" style="left:1496px;top:390.5px;width:15px;height:15px;background:#fff;border:1px solid #6b6b6b"></div>
<div class="t" style="left:1526.0px;top:391.5px;font-size:15.3px;color:#262626;">Axis Titles</div>
<div class="r" style="left:1496px;top:416.0px;width:15px;height:15px;background:#fff;border:1px solid #6b6b6b"></div>
<svg class="r" style="left:1497px;top:417.0px;" width="13" height="13" viewBox="0 0 13 13"><path d="M2.5 6.5l3 3.2L11 3" fill="none" stroke="#2b6ccf" stroke-width="1.6"/></svg>
<div class="t" style="left:1526.0px;top:417.0px;font-size:15.3px;color:#262626;">Chart Title</div>
<div class="r" style="left:1496px;top:441.5px;width:15px;height:15px;background:#fff;border:1px solid #6b6b6b"></div>
<svg class="r" style="left:1497px;top:442.5px;" width="13" height="13" viewBox="0 0 13 13"><path d="M2.5 6.5l3 3.2L11 3" fill="none" stroke="#2b6ccf" stroke-width="1.6"/></svg>
<div class="t" style="left:1526.0px;top:442.5px;font-size:15.3px;color:#262626;">Data Labels</div>
<div class="r" style="left:1496px;top:467.0px;width:15px;height:15px;background:#fff;border:1px solid #6b6b6b"></div>
<div class="t" style="left:1526.0px;top:468.0px;font-size:15.3px;color:#262626;">Data Table</div>
<div class="r" style="left:1496px;top:492.5px;width:15px;height:15px;background:#fff;border:1px solid #6b6b6b"></div>
<svg class="r" style="left:1497px;top:493.5px;" width="13" height="13" viewBox="0 0 13 13"><path d="M2.5 6.5l3 3.2L11 3" fill="none" stroke="#2b6ccf" stroke-width="1.6"/></svg>
<div class="t" style="left:1526.0px;top:493.5px;font-size:15.3px;color:#262626;">Error Bars</div>
<div class="r" style="left:1496px;top:518.0px;width:15px;height:15px;background:#fff;border:1px solid #6b6b6b"></div>
<svg class="r" style="left:1497px;top:519.0px;" width="13" height="13" viewBox="0 0 13 13"><path d="M2.5 6.5l3 3.2L11 3" fill="none" stroke="#2b6ccf" stroke-width="1.6"/></svg>
<div class="t" style="left:1526.0px;top:519.0px;font-size:15.3px;color:#262626;">Gridlines</div>
<div class="r" style="left:1496px;top:543.5px;width:15px;height:15px;background:#fff;border:1px solid #6b6b6b"></div>
<svg class="r" style="left:1497px;top:544.5px;" width="13" height="13" viewBox="0 0 13 13"><path d="M2.5 6.5l3 3.2L11 3" fill="none" stroke="#2b6ccf" stroke-width="1.6"/></svg>
<div class="t" style="left:1526.0px;top:544.5px;font-size:15.3px;color:#262626;">Legend</div>
<div class="r" style="left:1260px;top:393px;width:230px;height:79px;background:#fff;border:1px solid #c8c8c8;box-shadow:1px 1px 2px rgba(0,0,0,0.12)"></div>
<svg class="r" style="left:1270px;top:398px;" width="36" height="34" viewBox="0 0 36 34">
<path d="M6 12.5l9.5-7.5 8.5 9-9 10.5z" fill="#fff" stroke="#555" stroke-width="1.1"/>
<path d="M11.5 10V5.5a2.5 2.5 0 0 1 5 0V12" fill="none" stroke="#555" stroke-width="1.1"/>
<circle cx="15" cy="11" r="1.3" fill="#555"/>
<path d="M23 9.5c3 1.5 4 6 2 12" fill="none" stroke="#3b72c8" stroke-width="2"/>
<rect x="1" y="25" width="31.5" height="7.5" fill="#ed7d31"/>
</svg>
<svg class="r" style="left:1304px;top:411px;" width="9" height="6" viewBox="0 0 9 6"><path d="M0 0h8l-4 4.5z" fill="#555"/></svg>
<div class="t" style="left:986.5px;width:600px;text-align:center;top:441.7px;font-size:14.5px;color:#595959;">Fill</div>
<svg class="r" style="left:1320px;top:398px;" width="36" height="34" viewBox="0 0 36 34">
<path d="M27 5.5H3.5v16h7" fill="none" stroke="#666" stroke-width="1.1"/>
<path d="M12 24l1.5-5 13-13 3.5 3.5-13 13z" fill="#4472c4"/>
<path d="M12 24l1-3.5 2.5 2.5z" fill="#fff"/>
<rect x="2" y="25" width="31.5" height="7.5" fill="#4472c4"/>
</svg>
<svg class="r" style="left:1353px;top:411px;" width="9" height="6" viewBox="0 0 9 6"><path d="M0 0h8l-4 4.5z" fill="#555"/></svg>
<div class="t" style="left:1036.3px;width:600px;text-align:center;top:441.7px;font-size:14.5px;color:#595959;">Outline</div>
<div class="r" style="left:1363px;top:417px;width:124px;height:31px;background:#fff;border:1px solid #c8c8c8;"></div>
<div class="t" style="left:1366.0px;top:425.6px;font-size:14.6px;color:#262626;">Series "Accumu</div>
<svg class="r" style="left:1475px;top:431px;" width="9" height="6" viewBox="0 0 9 6"><path d="M0 0h8l-4 4.5z" fill="#555"/></svg>
<div class="r" style="left:1260px;top:493px;width:257px;height:261px;background:#fff;border:1px solid #c8c8c8;box-shadow:2px 2px 3px rgba(0,0,0,0.15)"></div>
<div class="r" style="left:1262px;top:721px;width:253px;height:32px;background:#c8c8c8;"></div>
<div class="t" style="left:1298.0px;top:504.0px;font-size:15.3px;color:#333;"><u>D</u>elete</div>
<div class="t" style="left:1298.0px;top:535.5px;font-size:15.3px;color:#333;">Reset to M<u>a</u>tch Style</div>
<div class="t" style="left:1298.0px;top:570.0px;font-size:15.3px;color:#333;">Change Series Chart T<u>y</u>pe...</div>
<div class="t" style="left:1298.0px;top:601.5px;font-size:15.3px;color:#333;">S<u>e</u>lect Data...</div>
<div class="t" style="left:1298.0px;top:632.5px;font-size:15.3px;color:#a6a6a6;">3-D <u>R</u>otation...</div>
<div class="t" style="left:1298.0px;top:667.0px;font-size:15.3px;color:#a6a6a6;">Add T<u>r</u>endline...</div>
<div class="t" style="left:1298.0px;top:699.0px;font-size:15.3px;color:#333;">Format Data La<u>b</u>els...</div>
<div class="t" style="left:1298.0px;top:730.0px;font-size:15.3px;color:#333;"><u>F</u>ormat Data Series...</div>
<div class="r" style="left:1300px;top:558px;width:215px;height:1px;background:#e1e1e1;"></div>
<div class="r" style="left:1300px;top:655px;width:215px;height:1px;background:#e1e1e1;"></div>
<svg class="r" style="left:1265px;top:529px;" width="24" height="24" viewBox="0 0 24 24">
<rect x="8" y="6" width="14" height="16" fill="#fff" stroke="#666" stroke-width="1"/>
<path d="M11 10h1M14 10h6M11 14h1M14 14h6M11 18h1M14 18h6" stroke="#666" stroke-width="1.2"/>
<path d="M3 7a6 6 0 0 1 9-3" fill="none" stroke="#2b6ccf" stroke-width="1.8"/>
<path d="M1 3l2 5 4-2z" fill="#2b6ccf"/>
</svg>
<svg class="r" style="left:1266px;top:566px;" width="22" height="22" viewBox="0 0 22 22">
<rect x="2" y="9" width="5" height="11" fill="#4472c4"/>
<rect x="8.5" y="2" width="5" height="18" fill="#f2c46b"/>
<rect x="15" y="6" width="5" height="14" fill="#6b6b6b"/>
</svg>
<svg class="r" style="left:1265px;top:597px;" width="24" height="24" viewBox="0 0 24 24">
<rect x="1" y="1" width="18" height="17" fill="#fff" stroke="#777" stroke-width="1"/>
<rect x="1" y="1" width="18" height="3" fill="#777"/>
<path d="M1 8h18M1 13h18M7 4v14M13 4v14" stroke="#aaa" stroke-width="0.8"/>
<path d="M7 8v5h6M7 8h6" fill="none" stroke="#e8a33d" stroke-width="1"/>
<rect x="10" y="11" width="12" height="11" fill="#fff" stroke="#666" stroke-width="1"/>
<path d="M13 21v-5h2v5M17 21v-7h2v7" fill="#ddd" stroke="#666" stroke-width="0.8"/>
</svg>
<svg class="r" style="left:1266px;top:629px;" width="22" height="22" viewBox="0 0 22 22">
<path d="M2.5 5Q3.5 1.5 7 1.5H16Q18.8 1.5 18.8 4.5V15Q18.8 17 17 18.5L15.5 19.5H5Q1.5 19.5 1.5 16.5V6z" fill="#babcc0"/>
<rect x="2.3" y="4.2" width="13.5" height="15" rx="2.5" fill="#f3f3f3" stroke="#c4c6ca" stroke-width="1"/>
</svg>
<svg class="r" style="left:1265px;top:726px;" width="26" height="24" viewBox="0 0 26 24">
<rect x="3" y="9" width="4" height="12" fill="#9c9c9c"/>
<rect x="8" y="3" width="4" height="18" fill="#a8a8a8"/>
<rect x="13" y="10" width="4" height="11" fill="#b0b0b0"/>
<path d="M22 8l2 2-8 8-2-2z" fill="#6b6b6b"/>
<path d="M12 16l3 3c-1 2-4 4-9 3 1-3 3-6 6-6z" fill="#3b72c8"/>
</svg>
</body></html>
